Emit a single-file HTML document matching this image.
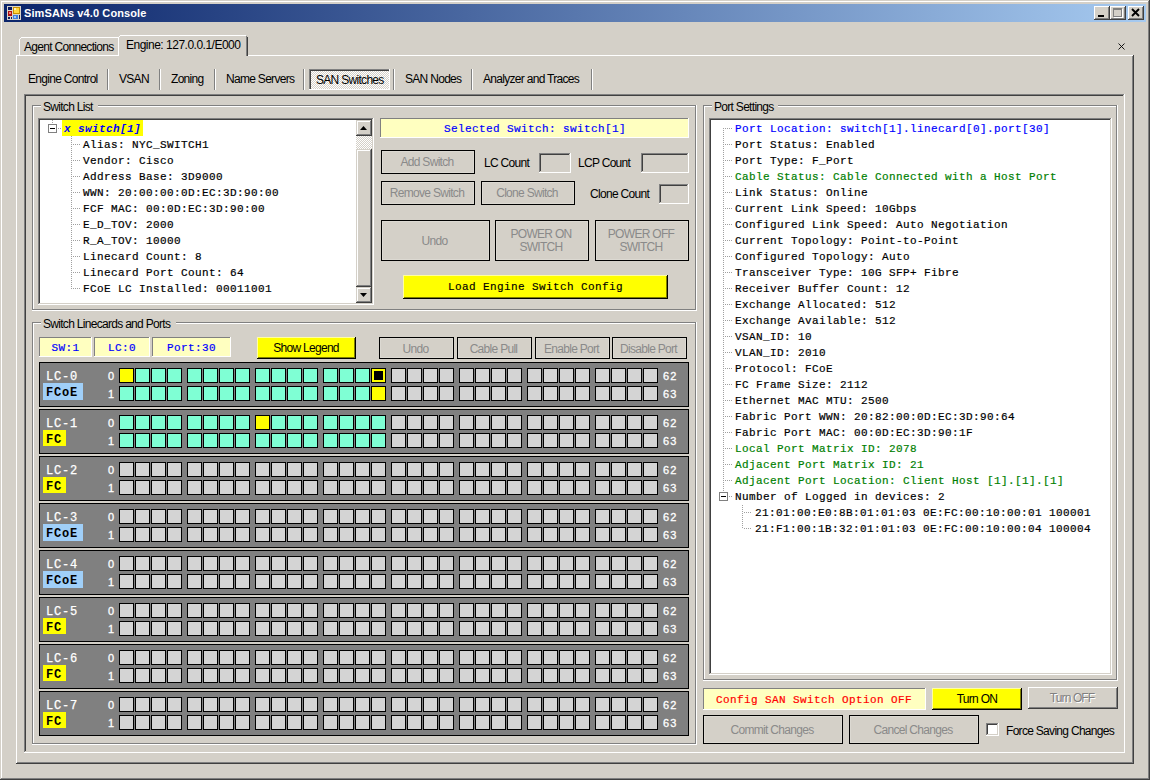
<!DOCTYPE html><html><head><meta charset="utf-8"><style>
html,body{margin:0;padding:0;}
body{width:1150px;height:780px;overflow:hidden;background:#d4d0c8;position:relative;font-family:"Liberation Sans",sans-serif;}
div{position:absolute;box-sizing:border-box;}
.t{font:12px "Liberation Sans",sans-serif;white-space:nowrap;color:#000;line-height:14px;letter-spacing:-0.7px;}
.c{text-align:center;}
.m{font:11px "Liberation Mono",monospace;-webkit-text-stroke-width:0.2px;white-space:nowrap;letter-spacing:0.4px;line-height:16px;color:#000;padding-top:1px;}
.mr{font:12px "Liberation Mono",monospace;white-space:nowrap;letter-spacing:-0.2px;line-height:16px;color:#000;}
</style></head><body>

<div style="left:1px;top:1px;width:1147px;height:1px;background:#ffffff"></div>
<div style="left:1px;top:1px;width:1px;height:777px;background:#ffffff"></div>
<div style="left:1148px;top:1px;width:1px;height:778px;background:#808080"></div>
<div style="left:1px;top:778px;width:1148px;height:1px;background:#808080"></div>
<div style="left:1149px;top:0px;width:1px;height:780px;background:#404040"></div>
<div style="left:0px;top:779px;width:1150px;height:1px;background:#404040"></div>
<div style="left:4px;top:4px;width:1142px;height:18px;background:linear-gradient(to right,#0a246a,#a6caf0)"></div>
<svg style="position:absolute;left:7px;top:6px" width="14" height="14" viewBox="0 0 14 14" shape-rendering="crispEdges">
<rect x="0" y="0" width="14" height="14" fill="#d8d4c8"/>
<rect x="1" y="1" width="4" height="3" fill="#0a1a60"/>
<rect x="1" y="5" width="4" height="5" fill="#b01010"/><rect x="2" y="6" width="2" height="2" fill="#f08080"/>
<rect x="1" y="11" width="2" height="2" fill="#0a1a60"/><rect x="4" y="11" width="1" height="2" fill="#0a1a60"/>
<rect x="6" y="1" width="7" height="7" fill="#c89000"/><rect x="7" y="2" width="5" height="5" fill="#ffd840"/><rect x="7" y="2" width="2" height="2" fill="#fff0c0"/>
<rect x="6" y="9" width="5" height="4" fill="#4080e0"/><rect x="7" y="10" width="2" height="2" fill="#a0c8f8"/>
<rect x="12" y="9" width="1" height="4" fill="#0a1a60"/>
</svg>
<div class="t" style="left:24px;top:6px;color:#fff;font-weight:bold;font-size:11px;letter-spacing:0.1px;">SimSANs v4.0 Console</div>
<div style="left:1094px;top:6px;width:16px;height:14px;background:#d4d0c8"></div>
<div style="left:1094px;top:19px;width:16px;height:1px;background:#404040"></div>
<div style="left:1109px;top:6px;width:1px;height:14px;background:#404040"></div>
<div style="left:1094px;top:6px;width:15px;height:1px;background:#ffffff"></div>
<div style="left:1094px;top:6px;width:1px;height:13px;background:#ffffff"></div>
<div style="left:1095px;top:18px;width:14px;height:1px;background:#808080"></div>
<div style="left:1108px;top:7px;width:1px;height:12px;background:#808080"></div>
<div style="left:1098px;top:15px;width:6px;height:2px;background:#000"></div>
<div style="left:1110px;top:6px;width:16px;height:14px;background:#d4d0c8"></div>
<div style="left:1110px;top:19px;width:16px;height:1px;background:#404040"></div>
<div style="left:1125px;top:6px;width:1px;height:14px;background:#404040"></div>
<div style="left:1110px;top:6px;width:15px;height:1px;background:#ffffff"></div>
<div style="left:1110px;top:6px;width:1px;height:13px;background:#ffffff"></div>
<div style="left:1111px;top:18px;width:14px;height:1px;background:#808080"></div>
<div style="left:1124px;top:7px;width:1px;height:12px;background:#808080"></div>
<div style="left:1113px;top:8px;width:9px;height:9px;border:1px solid #808080;border-top-width:2px;box-shadow:1px 1px 0 #fff"></div>
<div style="left:1128px;top:6px;width:16px;height:14px;background:#d4d0c8"></div>
<div style="left:1128px;top:19px;width:16px;height:1px;background:#404040"></div>
<div style="left:1143px;top:6px;width:1px;height:14px;background:#404040"></div>
<div style="left:1128px;top:6px;width:15px;height:1px;background:#ffffff"></div>
<div style="left:1128px;top:6px;width:1px;height:13px;background:#ffffff"></div>
<div style="left:1129px;top:18px;width:14px;height:1px;background:#808080"></div>
<div style="left:1142px;top:7px;width:1px;height:12px;background:#808080"></div>
<svg style="position:absolute;left:1131px;top:8px" width="10" height="9" viewBox="0 0 10 9"><path d="M1 1L8 8M8 1L1 8" stroke="#000" stroke-width="1.9"/></svg>
<div style="left:16px;top:55px;width:102px;height:1px;background:#ffffff"></div>
<div style="left:248px;top:55px;width:886px;height:1px;background:#ffffff"></div>
<div style="left:16px;top:55px;width:1px;height:709px;background:#ffffff"></div>
<div style="left:1132px;top:56px;width:1px;height:707px;background:#808080"></div>
<div style="left:1133px;top:55px;width:1px;height:709px;background:#404040"></div>
<div style="left:17px;top:762px;width:1116px;height:1px;background:#808080"></div>
<div style="left:16px;top:763px;width:1118px;height:1px;background:#404040"></div>
<div style="left:21px;top:37px;width:97px;height:1px;background:#ffffff"></div>
<div style="left:19px;top:39px;width:1px;height:16px;background:#ffffff"></div>
<div style="left:20px;top:38px;width:1px;height:1px;background:#ffffff"></div>
<div class="t" style="left:24px;top:40px;letter-spacing:-0.7px">Agent Connections</div>
<div style="left:120px;top:35px;width:126px;height:1px;background:#ffffff"></div>
<div style="left:118px;top:37px;width:1px;height:19px;background:#ffffff"></div>
<div style="left:119px;top:36px;width:1px;height:1px;background:#ffffff"></div>
<div style="left:246px;top:36px;width:1px;height:20px;background:#808080"></div>
<div style="left:247px;top:37px;width:1px;height:19px;background:#404040"></div>
<div class="t" style="left:126px;top:38px;letter-spacing:-0.5px">Engine: 127.0.0.1/E000</div>
<svg style="position:absolute;left:1118px;top:43px" width="7" height="7"><path d="M0.5 0.5L6.5 6.5M6.5 0.5L0.5 6.5" stroke="#000" stroke-width="0.9"/></svg>
<div class="t" style="left:28px;top:72px;">Engine Control</div>
<div style="left:107px;top:69px;width:1px;height:21px;background:#808080"></div>
<div style="left:108px;top:69px;width:1px;height:21px;background:#ffffff"></div>
<div class="t" style="left:119px;top:72px;">VSAN</div>
<div style="left:159px;top:69px;width:1px;height:21px;background:#808080"></div>
<div style="left:160px;top:69px;width:1px;height:21px;background:#ffffff"></div>
<div class="t" style="left:171px;top:72px;">Zoning</div>
<div style="left:214px;top:69px;width:1px;height:21px;background:#808080"></div>
<div style="left:215px;top:69px;width:1px;height:21px;background:#ffffff"></div>
<div class="t" style="left:226px;top:72px;">Name Servers</div>
<div style="left:303px;top:69px;width:1px;height:21px;background:#808080"></div>
<div style="left:304px;top:69px;width:1px;height:21px;background:#ffffff"></div>
<div style="left:309px;top:69px;width:81px;height:21px;background-color:#fff;background-image:repeating-conic-gradient(#d4d0c8 0 25%,#fff 0 50%);background-size:2px 2px;"></div>
<div style="left:309px;top:69px;width:81px;height:1px;background:#808080"></div>
<div style="left:309px;top:69px;width:1px;height:21px;background:#808080"></div>
<div style="left:310px;top:70px;width:79px;height:1px;background:#404040"></div>
<div style="left:310px;top:70px;width:1px;height:19px;background:#404040"></div>
<div style="left:309px;top:89px;width:81px;height:1px;background:#ffffff"></div>
<div style="left:389px;top:69px;width:1px;height:21px;background:#ffffff"></div>
<div class="t" style="left:316px;top:73px;">SAN Switches</div>
<div style="left:393px;top:69px;width:1px;height:21px;background:#808080"></div>
<div style="left:394px;top:69px;width:1px;height:21px;background:#ffffff"></div>
<div class="t" style="left:405px;top:72px;">SAN Nodes</div>
<div style="left:471px;top:69px;width:1px;height:21px;background:#808080"></div>
<div style="left:472px;top:69px;width:1px;height:21px;background:#ffffff"></div>
<div class="t" style="left:483px;top:72px;">Analyzer and Traces</div>
<div style="left:591px;top:69px;width:1px;height:21px;background:#808080"></div>
<div style="left:592px;top:69px;width:1px;height:21px;background:#ffffff"></div>
<div style="left:24px;top:94px;width:1101px;height:1px;background:#808080"></div>
<div style="left:24px;top:94px;width:1px;height:659px;background:#808080"></div>
<div style="left:25px;top:95px;width:1099px;height:1px;background:#404040"></div>
<div style="left:25px;top:95px;width:1px;height:657px;background:#404040"></div>
<div style="left:1124px;top:94px;width:1px;height:659px;background:#ffffff"></div>
<div style="left:24px;top:752px;width:1101px;height:1px;background:#ffffff"></div>
<div style="left:1123px;top:95px;width:1px;height:657px;background:#d4d0c8"></div>
<div style="left:25px;top:751px;width:1099px;height:1px;background:#d4d0c8"></div>
<div style="left:32px;top:105px;width:9px;height:1px;background:#808080"></div>
<div style="left:33px;top:106px;width:8px;height:1px;background:#ffffff"></div>
<div style="left:98px;top:105px;width:598px;height:1px;background:#808080"></div>
<div style="left:98px;top:106px;width:599px;height:1px;background:#ffffff"></div>
<div style="left:32px;top:105px;width:1px;height:205px;background:#808080"></div>
<div style="left:33px;top:106px;width:1px;height:204px;background:#ffffff"></div>
<div style="left:695px;top:105px;width:1px;height:205px;background:#808080"></div>
<div style="left:696px;top:105px;width:1px;height:206px;background:#ffffff"></div>
<div style="left:32px;top:309px;width:664px;height:1px;background:#808080"></div>
<div style="left:32px;top:310px;width:665px;height:1px;background:#ffffff"></div>
<div class="t" style="left:43px;top:100px;">Switch List</div>
<div style="left:38px;top:118px;width:336px;height:187px;background:#ffffff"></div>
<div style="left:38px;top:118px;width:336px;height:1px;background:#808080"></div>
<div style="left:38px;top:118px;width:1px;height:187px;background:#808080"></div>
<div style="left:38px;top:304px;width:336px;height:1px;background:#ffffff"></div>
<div style="left:373px;top:118px;width:1px;height:187px;background:#ffffff"></div>
<div style="left:39px;top:119px;width:334px;height:1px;background:#404040"></div>
<div style="left:39px;top:119px;width:1px;height:185px;background:#404040"></div>
<div style="left:39px;top:303px;width:334px;height:1px;background:#d4d0c8"></div>
<div style="left:372px;top:119px;width:1px;height:185px;background:#d4d0c8"></div>
<div style="left:356px;top:120px;width:16px;height:183px;background:#d4d0c8"></div>
<div style="left:356px;top:136px;width:16px;height:13px;background-color:#fff;background-image:repeating-conic-gradient(#d4d0c8 0 25%,#fff 0 50%);background-size:2px 2px;"></div>
<div style="left:356px;top:120px;width:16px;height:16px;background:#d4d0c8"></div>
<div style="left:356px;top:135px;width:16px;height:1px;background:#404040"></div>
<div style="left:371px;top:120px;width:1px;height:16px;background:#404040"></div>
<div style="left:357px;top:121px;width:13px;height:1px;background:#ffffff"></div>
<div style="left:357px;top:121px;width:1px;height:13px;background:#ffffff"></div>
<div style="left:357px;top:134px;width:14px;height:1px;background:#808080"></div>
<div style="left:370px;top:121px;width:1px;height:14px;background:#808080"></div>
<svg style="position:absolute;left:360px;top:126px" width="7" height="4"><path d="M3.5 0L7 4H0Z" fill="#000"/></svg>
<div style="left:356px;top:149px;width:16px;height:138px;background:#d4d0c8"></div>
<div style="left:356px;top:286px;width:16px;height:1px;background:#404040"></div>
<div style="left:371px;top:149px;width:1px;height:138px;background:#404040"></div>
<div style="left:357px;top:150px;width:13px;height:1px;background:#ffffff"></div>
<div style="left:357px;top:150px;width:1px;height:135px;background:#ffffff"></div>
<div style="left:357px;top:285px;width:14px;height:1px;background:#808080"></div>
<div style="left:370px;top:150px;width:1px;height:136px;background:#808080"></div>
<div style="left:356px;top:287px;width:16px;height:16px;background:#d4d0c8"></div>
<div style="left:356px;top:302px;width:16px;height:1px;background:#404040"></div>
<div style="left:371px;top:287px;width:1px;height:16px;background:#404040"></div>
<div style="left:357px;top:288px;width:13px;height:1px;background:#ffffff"></div>
<div style="left:357px;top:288px;width:1px;height:13px;background:#ffffff"></div>
<div style="left:357px;top:301px;width:14px;height:1px;background:#808080"></div>
<div style="left:370px;top:288px;width:1px;height:14px;background:#808080"></div>
<svg style="position:absolute;left:360px;top:293px" width="7" height="4"><path d="M0 0H7L3.5 4Z" fill="#000"/></svg>
<div style="left:52px;top:120px;width:1px;height:1px;background:#a0a0a0"></div>
<div style="left:52px;top:122px;width:1px;height:1px;background:#a0a0a0"></div>
<div style="left:48px;top:124px;width:9px;height:9px;border:1px solid #808080;background:#fff"></div>
<div style="left:50px;top:128px;width:5px;height:1px;background:#000000"></div>
<div style="left:58px;top:128px;width:4px;height:1px;background:repeating-linear-gradient(to right,#a0a0a0 0 1px,transparent 1px 2px)"></div>
<div style="left:62px;top:120px;width:81px;height:16px;background:#ffff00"></div>
<div class="m" style="left:64px;top:120px;color:#0000ff;font-style:italic;font-weight:bold;-webkit-text-stroke-width:0">x switch[1]</div>
<div style="left:71px;top:136px;width:1px;height:153px;background:repeating-linear-gradient(to bottom,#a0a0a0 0 1px,transparent 1px 2px)"></div>
<div style="left:73px;top:144px;width:8px;height:1px;background:repeating-linear-gradient(to right,#a0a0a0 0 1px,transparent 1px 2px)"></div>
<div class="m" style="left:83px;top:136px">Alias: NYC_SWITCH1</div>
<div style="left:73px;top:160px;width:8px;height:1px;background:repeating-linear-gradient(to right,#a0a0a0 0 1px,transparent 1px 2px)"></div>
<div class="m" style="left:83px;top:152px">Vendor: Cisco</div>
<div style="left:73px;top:176px;width:8px;height:1px;background:repeating-linear-gradient(to right,#a0a0a0 0 1px,transparent 1px 2px)"></div>
<div class="m" style="left:83px;top:168px">Address Base: 3D9000</div>
<div style="left:73px;top:192px;width:8px;height:1px;background:repeating-linear-gradient(to right,#a0a0a0 0 1px,transparent 1px 2px)"></div>
<div class="m" style="left:83px;top:184px">WWN: 20:00:00:0D:EC:3D:90:00</div>
<div style="left:73px;top:208px;width:8px;height:1px;background:repeating-linear-gradient(to right,#a0a0a0 0 1px,transparent 1px 2px)"></div>
<div class="m" style="left:83px;top:200px">FCF MAC: 00:0D:EC:3D:90:00</div>
<div style="left:73px;top:224px;width:8px;height:1px;background:repeating-linear-gradient(to right,#a0a0a0 0 1px,transparent 1px 2px)"></div>
<div class="m" style="left:83px;top:216px">E_D_TOV: 2000</div>
<div style="left:73px;top:240px;width:8px;height:1px;background:repeating-linear-gradient(to right,#a0a0a0 0 1px,transparent 1px 2px)"></div>
<div class="m" style="left:83px;top:232px">R_A_TOV: 10000</div>
<div style="left:73px;top:256px;width:8px;height:1px;background:repeating-linear-gradient(to right,#a0a0a0 0 1px,transparent 1px 2px)"></div>
<div class="m" style="left:83px;top:248px">Linecard Count: 8</div>
<div style="left:73px;top:272px;width:8px;height:1px;background:repeating-linear-gradient(to right,#a0a0a0 0 1px,transparent 1px 2px)"></div>
<div class="m" style="left:83px;top:264px">Linecard Port Count: 64</div>
<div style="left:73px;top:288px;width:8px;height:1px;background:repeating-linear-gradient(to right,#a0a0a0 0 1px,transparent 1px 2px)"></div>
<div class="m" style="left:83px;top:280px">FCoE LC Installed: 00011001</div>
<div style="left:380px;top:118px;width:309px;height:20px;background:#ffffc0"></div>
<div style="left:380px;top:118px;width:309px;height:1px;background:#808080"></div>
<div style="left:380px;top:118px;width:1px;height:20px;background:#808080"></div>
<div style="left:380px;top:137px;width:309px;height:1px;background:#ffffff"></div>
<div style="left:688px;top:118px;width:1px;height:20px;background:#ffffff"></div>
<div class="m c" style="left:381px;top:120px;width:308px;color:#0000ff">Selected Switch: switch[1]</div>
<div style="left:381px;top:150px;width:94px;height:24px;background:#000000"></div>
<div style="left:382px;top:151px;width:92px;height:22px;background:#dcd9d2"></div>
<div style="left:383px;top:152px;width:90px;height:20px;background:#d4d0c8"></div>
<div class="t c" style="left:380px;top:150px;width:94px;height:24px;line-height:24px;color:#8a8a8a">Add Switch</div>
<div class="t" style="left:484px;top:156px;">LC Count</div>
<div style="left:539px;top:153px;width:32px;height:20px;background:#d4d0c8"></div>
<div style="left:539px;top:153px;width:32px;height:1px;background:#808080"></div>
<div style="left:539px;top:153px;width:1px;height:20px;background:#808080"></div>
<div style="left:539px;top:172px;width:32px;height:1px;background:#ffffff"></div>
<div style="left:570px;top:153px;width:1px;height:20px;background:#ffffff"></div>
<div style="left:540px;top:154px;width:30px;height:1px;background:#404040"></div>
<div style="left:540px;top:154px;width:1px;height:18px;background:#404040"></div>
<div style="left:540px;top:171px;width:30px;height:1px;background:#d4d0c8"></div>
<div style="left:569px;top:154px;width:1px;height:18px;background:#d4d0c8"></div>
<div class="t" style="left:578px;top:156px;">LCP Count</div>
<div style="left:641px;top:153px;width:48px;height:20px;background:#d4d0c8"></div>
<div style="left:641px;top:153px;width:48px;height:1px;background:#808080"></div>
<div style="left:641px;top:153px;width:1px;height:20px;background:#808080"></div>
<div style="left:641px;top:172px;width:48px;height:1px;background:#ffffff"></div>
<div style="left:688px;top:153px;width:1px;height:20px;background:#ffffff"></div>
<div style="left:642px;top:154px;width:46px;height:1px;background:#404040"></div>
<div style="left:642px;top:154px;width:1px;height:18px;background:#404040"></div>
<div style="left:642px;top:171px;width:46px;height:1px;background:#d4d0c8"></div>
<div style="left:687px;top:154px;width:1px;height:18px;background:#d4d0c8"></div>
<div style="left:381px;top:181px;width:94px;height:24px;background:#000000"></div>
<div style="left:382px;top:182px;width:92px;height:22px;background:#dcd9d2"></div>
<div style="left:383px;top:183px;width:90px;height:20px;background:#d4d0c8"></div>
<div class="t c" style="left:380px;top:181px;width:94px;height:24px;line-height:24px;color:#8a8a8a">Remove Switch</div>
<div style="left:481px;top:181px;width:94px;height:24px;background:#000000"></div>
<div style="left:482px;top:182px;width:92px;height:22px;background:#dcd9d2"></div>
<div style="left:483px;top:183px;width:90px;height:20px;background:#d4d0c8"></div>
<div class="t c" style="left:480px;top:181px;width:94px;height:24px;line-height:24px;color:#8a8a8a">Clone Switch</div>
<div class="t" style="left:590px;top:187px;">Clone Count</div>
<div style="left:659px;top:184px;width:30px;height:20px;background:#d4d0c8"></div>
<div style="left:659px;top:184px;width:30px;height:1px;background:#808080"></div>
<div style="left:659px;top:184px;width:1px;height:20px;background:#808080"></div>
<div style="left:659px;top:203px;width:30px;height:1px;background:#ffffff"></div>
<div style="left:688px;top:184px;width:1px;height:20px;background:#ffffff"></div>
<div style="left:660px;top:185px;width:28px;height:1px;background:#404040"></div>
<div style="left:660px;top:185px;width:1px;height:18px;background:#404040"></div>
<div style="left:660px;top:202px;width:28px;height:1px;background:#d4d0c8"></div>
<div style="left:687px;top:185px;width:1px;height:18px;background:#d4d0c8"></div>
<div style="left:381px;top:220px;width:109px;height:41px;background:#000000"></div>
<div style="left:382px;top:221px;width:107px;height:39px;background:#dcd9d2"></div>
<div style="left:383px;top:222px;width:105px;height:37px;background:#d4d0c8"></div>
<div class="t c" style="left:380px;top:221px;width:109px;height:41px;line-height:41px;color:#8a8a8a">Undo</div>
<div style="left:495px;top:220px;width:94px;height:41px;background:#000000"></div>
<div style="left:496px;top:221px;width:92px;height:39px;background:#dcd9d2"></div>
<div style="left:497px;top:222px;width:90px;height:37px;background:#d4d0c8"></div>
<div class="t c" style="left:494px;top:220px;width:94px;height:41px;line-height:41px;color:#8a8a8a"></div>
<div class="t c" style="left:494px;top:228px;width:94px;color:#8a8a8a;line-height:13px">POWER ON<br>SWITCH</div>
<div style="left:595px;top:220px;width:94px;height:41px;background:#000000"></div>
<div style="left:596px;top:221px;width:92px;height:39px;background:#dcd9d2"></div>
<div style="left:597px;top:222px;width:90px;height:37px;background:#d4d0c8"></div>
<div class="t c" style="left:594px;top:220px;width:94px;height:41px;line-height:41px;color:#8a8a8a"></div>
<div class="t c" style="left:594px;top:228px;width:94px;color:#8a8a8a;line-height:13px">POWER OFF<br>SWITCH</div>
<div style="left:403px;top:275px;width:265px;height:24px;background:#ffff00"></div>
<div style="left:403px;top:298px;width:265px;height:1px;background:#000000"></div>
<div style="left:667px;top:275px;width:1px;height:24px;background:#000000"></div>
<div style="left:403px;top:275px;width:264px;height:1px;background:#ffffa0"></div>
<div style="left:403px;top:275px;width:1px;height:23px;background:#ffffa0"></div>
<div style="left:404px;top:297px;width:263px;height:1px;background:#808000"></div>
<div style="left:666px;top:276px;width:1px;height:22px;background:#808000"></div>
<div class="m c" style="left:403px;top:278px;width:265px;-webkit-text-stroke-width:0.15px">Load Engine Switch Config</div>
<div style="left:32px;top:322px;width:9px;height:1px;background:#808080"></div>
<div style="left:33px;top:323px;width:8px;height:1px;background:#ffffff"></div>
<div style="left:176px;top:322px;width:520px;height:1px;background:#808080"></div>
<div style="left:176px;top:323px;width:521px;height:1px;background:#ffffff"></div>
<div style="left:32px;top:322px;width:1px;height:422px;background:#808080"></div>
<div style="left:33px;top:323px;width:1px;height:421px;background:#ffffff"></div>
<div style="left:695px;top:322px;width:1px;height:422px;background:#808080"></div>
<div style="left:696px;top:322px;width:1px;height:423px;background:#ffffff"></div>
<div style="left:32px;top:743px;width:664px;height:1px;background:#808080"></div>
<div style="left:32px;top:744px;width:665px;height:1px;background:#ffffff"></div>
<div class="t" style="left:43px;top:317px;">Switch Linecards and Ports</div>
<div style="left:39px;top:337px;width:53px;height:20px;background:#ffffc0"></div>
<div style="left:39px;top:337px;width:53px;height:1px;background:#808080"></div>
<div style="left:39px;top:337px;width:1px;height:20px;background:#808080"></div>
<div style="left:39px;top:356px;width:53px;height:1px;background:#ffffff"></div>
<div style="left:91px;top:337px;width:1px;height:20px;background:#ffffff"></div>
<div class="m c" style="left:39px;top:339px;width:53px;color:#0000ff">SW:1</div>
<div style="left:94px;top:337px;width:56px;height:20px;background:#ffffc0"></div>
<div style="left:94px;top:337px;width:56px;height:1px;background:#808080"></div>
<div style="left:94px;top:337px;width:1px;height:20px;background:#808080"></div>
<div style="left:94px;top:356px;width:56px;height:1px;background:#ffffff"></div>
<div style="left:149px;top:337px;width:1px;height:20px;background:#ffffff"></div>
<div class="m c" style="left:94px;top:339px;width:56px;color:#0000ff">LC:0</div>
<div style="left:152px;top:337px;width:79px;height:20px;background:#ffffc0"></div>
<div style="left:152px;top:337px;width:79px;height:1px;background:#808080"></div>
<div style="left:152px;top:337px;width:1px;height:20px;background:#808080"></div>
<div style="left:152px;top:356px;width:79px;height:1px;background:#ffffff"></div>
<div style="left:230px;top:337px;width:1px;height:20px;background:#ffffff"></div>
<div class="m c" style="left:152px;top:339px;width:79px;color:#0000ff">Port:30</div>
<div style="left:257px;top:337px;width:99px;height:22px;background:#ffff00"></div>
<div style="left:257px;top:358px;width:99px;height:1px;background:#000000"></div>
<div style="left:355px;top:337px;width:1px;height:22px;background:#000000"></div>
<div style="left:257px;top:337px;width:98px;height:1px;background:#ffffa0"></div>
<div style="left:257px;top:337px;width:1px;height:21px;background:#ffffa0"></div>
<div style="left:258px;top:357px;width:97px;height:1px;background:#808000"></div>
<div style="left:354px;top:338px;width:1px;height:20px;background:#808000"></div>
<div class="t c" style="left:257px;top:341px;width:98px;">Show Legend</div>
<div style="left:379px;top:337px;width:75px;height:22px;background:#000000"></div>
<div style="left:380px;top:338px;width:73px;height:20px;background:#dcd9d2"></div>
<div style="left:381px;top:339px;width:71px;height:18px;background:#d4d0c8"></div>
<div class="t c" style="left:378px;top:338px;width:75px;height:22px;line-height:22px;color:#8a8a8a">Undo</div>
<div style="left:457px;top:337px;width:75px;height:22px;background:#000000"></div>
<div style="left:458px;top:338px;width:73px;height:20px;background:#dcd9d2"></div>
<div style="left:459px;top:339px;width:71px;height:18px;background:#d4d0c8"></div>
<div class="t c" style="left:456px;top:338px;width:75px;height:22px;line-height:22px;color:#8a8a8a">Cable Pull</div>
<div style="left:535px;top:337px;width:75px;height:22px;background:#000000"></div>
<div style="left:536px;top:338px;width:73px;height:20px;background:#dcd9d2"></div>
<div style="left:537px;top:339px;width:71px;height:18px;background:#d4d0c8"></div>
<div class="t c" style="left:534px;top:338px;width:75px;height:22px;line-height:22px;color:#8a8a8a">Enable Port</div>
<div style="left:612px;top:337px;width:75px;height:22px;background:#000000"></div>
<div style="left:613px;top:338px;width:73px;height:20px;background:#dcd9d2"></div>
<div style="left:614px;top:339px;width:71px;height:18px;background:#d4d0c8"></div>
<div class="t c" style="left:611px;top:338px;width:75px;height:22px;line-height:22px;color:#8a8a8a">Disable Port</div>
<div style="left:39px;top:362px;width:650px;height:45px;background:#000000"></div>
<div style="left:40px;top:363px;width:648px;height:43px;background:#808080"></div>
<div class="mr" style="left:46px;top:369px;color:#ffffff;font-size:12px;letter-spacing:0.8px;-webkit-text-stroke:0.25px #fff">LC-0</div>
<div style="left:43px;top:383px;width:40px;height:17px;background:#a0cff8"></div>
<div class="mr" style="left:46px;top:385px;font-weight:bold;font-size:12px;letter-spacing:0.8px">FCoE</div>
<div class="t" style="left:108px;top:369px;color:#fff;font-size:11px;letter-spacing:1.2px;-webkit-text-stroke:0.3px #fff">0</div>
<div class="t" style="left:108px;top:387px;color:#fff;font-size:11px;letter-spacing:1.2px;-webkit-text-stroke:0.3px #fff">1</div>
<div class="t" style="left:663px;top:369px;color:#fff;font-size:11px;letter-spacing:1.2px;-webkit-text-stroke:0.3px #fff">62</div>
<div class="t" style="left:663px;top:387px;color:#fff;font-size:11px;letter-spacing:1.2px;-webkit-text-stroke:0.3px #fff">63</div>
<div style="left:119px;top:368px;width:15px;height:15px;border:1px solid #000;background:#ffff00"></div>
<div style="left:135px;top:368px;width:15px;height:15px;border:1px solid #000;background:#7fffd4"></div>
<div style="left:151px;top:368px;width:15px;height:15px;border:1px solid #000;background:#7fffd4"></div>
<div style="left:167px;top:368px;width:15px;height:15px;border:1px solid #000;background:#7fffd4"></div>
<div style="left:187px;top:368px;width:15px;height:15px;border:1px solid #000;background:#7fffd4"></div>
<div style="left:203px;top:368px;width:15px;height:15px;border:1px solid #000;background:#7fffd4"></div>
<div style="left:219px;top:368px;width:15px;height:15px;border:1px solid #000;background:#7fffd4"></div>
<div style="left:235px;top:368px;width:15px;height:15px;border:1px solid #000;background:#7fffd4"></div>
<div style="left:255px;top:368px;width:15px;height:15px;border:1px solid #000;background:#7fffd4"></div>
<div style="left:271px;top:368px;width:15px;height:15px;border:1px solid #000;background:#7fffd4"></div>
<div style="left:287px;top:368px;width:15px;height:15px;border:1px solid #000;background:#7fffd4"></div>
<div style="left:303px;top:368px;width:15px;height:15px;border:1px solid #000;background:#7fffd4"></div>
<div style="left:323px;top:368px;width:15px;height:15px;border:1px solid #000;background:#7fffd4"></div>
<div style="left:339px;top:368px;width:15px;height:15px;border:1px solid #000;background:#7fffd4"></div>
<div style="left:355px;top:368px;width:15px;height:15px;border:1px solid #000;background:#7fffd4"></div>
<div style="left:371px;top:368px;width:15px;height:15px;border:1px solid #000;background:#ffff00"></div>
<div style="left:374px;top:371px;width:9px;height:9px;background:#000000"></div>
<div style="left:391px;top:368px;width:15px;height:15px;border:1px solid #000;background:#d4d4d4"></div>
<div style="left:407px;top:368px;width:15px;height:15px;border:1px solid #000;background:#d4d4d4"></div>
<div style="left:423px;top:368px;width:15px;height:15px;border:1px solid #000;background:#d4d4d4"></div>
<div style="left:439px;top:368px;width:15px;height:15px;border:1px solid #000;background:#d4d4d4"></div>
<div style="left:459px;top:368px;width:15px;height:15px;border:1px solid #000;background:#d4d4d4"></div>
<div style="left:475px;top:368px;width:15px;height:15px;border:1px solid #000;background:#d4d4d4"></div>
<div style="left:491px;top:368px;width:15px;height:15px;border:1px solid #000;background:#d4d4d4"></div>
<div style="left:507px;top:368px;width:15px;height:15px;border:1px solid #000;background:#d4d4d4"></div>
<div style="left:527px;top:368px;width:15px;height:15px;border:1px solid #000;background:#d4d4d4"></div>
<div style="left:543px;top:368px;width:15px;height:15px;border:1px solid #000;background:#d4d4d4"></div>
<div style="left:559px;top:368px;width:15px;height:15px;border:1px solid #000;background:#d4d4d4"></div>
<div style="left:575px;top:368px;width:15px;height:15px;border:1px solid #000;background:#d4d4d4"></div>
<div style="left:595px;top:368px;width:15px;height:15px;border:1px solid #000;background:#d4d4d4"></div>
<div style="left:611px;top:368px;width:15px;height:15px;border:1px solid #000;background:#d4d4d4"></div>
<div style="left:627px;top:368px;width:15px;height:15px;border:1px solid #000;background:#d4d4d4"></div>
<div style="left:643px;top:368px;width:15px;height:15px;border:1px solid #000;background:#d4d4d4"></div>
<div style="left:119px;top:386px;width:15px;height:15px;border:1px solid #000;background:#7fffd4"></div>
<div style="left:135px;top:386px;width:15px;height:15px;border:1px solid #000;background:#7fffd4"></div>
<div style="left:151px;top:386px;width:15px;height:15px;border:1px solid #000;background:#7fffd4"></div>
<div style="left:167px;top:386px;width:15px;height:15px;border:1px solid #000;background:#7fffd4"></div>
<div style="left:187px;top:386px;width:15px;height:15px;border:1px solid #000;background:#7fffd4"></div>
<div style="left:203px;top:386px;width:15px;height:15px;border:1px solid #000;background:#7fffd4"></div>
<div style="left:219px;top:386px;width:15px;height:15px;border:1px solid #000;background:#7fffd4"></div>
<div style="left:235px;top:386px;width:15px;height:15px;border:1px solid #000;background:#7fffd4"></div>
<div style="left:255px;top:386px;width:15px;height:15px;border:1px solid #000;background:#7fffd4"></div>
<div style="left:271px;top:386px;width:15px;height:15px;border:1px solid #000;background:#7fffd4"></div>
<div style="left:287px;top:386px;width:15px;height:15px;border:1px solid #000;background:#7fffd4"></div>
<div style="left:303px;top:386px;width:15px;height:15px;border:1px solid #000;background:#7fffd4"></div>
<div style="left:323px;top:386px;width:15px;height:15px;border:1px solid #000;background:#7fffd4"></div>
<div style="left:339px;top:386px;width:15px;height:15px;border:1px solid #000;background:#7fffd4"></div>
<div style="left:355px;top:386px;width:15px;height:15px;border:1px solid #000;background:#7fffd4"></div>
<div style="left:371px;top:386px;width:15px;height:15px;border:1px solid #000;background:#ffff00"></div>
<div style="left:391px;top:386px;width:15px;height:15px;border:1px solid #000;background:#d4d4d4"></div>
<div style="left:407px;top:386px;width:15px;height:15px;border:1px solid #000;background:#d4d4d4"></div>
<div style="left:423px;top:386px;width:15px;height:15px;border:1px solid #000;background:#d4d4d4"></div>
<div style="left:439px;top:386px;width:15px;height:15px;border:1px solid #000;background:#d4d4d4"></div>
<div style="left:459px;top:386px;width:15px;height:15px;border:1px solid #000;background:#d4d4d4"></div>
<div style="left:475px;top:386px;width:15px;height:15px;border:1px solid #000;background:#d4d4d4"></div>
<div style="left:491px;top:386px;width:15px;height:15px;border:1px solid #000;background:#d4d4d4"></div>
<div style="left:507px;top:386px;width:15px;height:15px;border:1px solid #000;background:#d4d4d4"></div>
<div style="left:527px;top:386px;width:15px;height:15px;border:1px solid #000;background:#d4d4d4"></div>
<div style="left:543px;top:386px;width:15px;height:15px;border:1px solid #000;background:#d4d4d4"></div>
<div style="left:559px;top:386px;width:15px;height:15px;border:1px solid #000;background:#d4d4d4"></div>
<div style="left:575px;top:386px;width:15px;height:15px;border:1px solid #000;background:#d4d4d4"></div>
<div style="left:595px;top:386px;width:15px;height:15px;border:1px solid #000;background:#d4d4d4"></div>
<div style="left:611px;top:386px;width:15px;height:15px;border:1px solid #000;background:#d4d4d4"></div>
<div style="left:627px;top:386px;width:15px;height:15px;border:1px solid #000;background:#d4d4d4"></div>
<div style="left:643px;top:386px;width:15px;height:15px;border:1px solid #000;background:#d4d4d4"></div>
<div style="left:39px;top:409px;width:650px;height:45px;background:#000000"></div>
<div style="left:40px;top:410px;width:648px;height:43px;background:#808080"></div>
<div class="mr" style="left:46px;top:416px;color:#ffffff;font-size:12px;letter-spacing:0.8px;-webkit-text-stroke:0.25px #fff">LC-1</div>
<div style="left:43px;top:430px;width:23px;height:16px;background:#ffff00"></div>
<div class="mr" style="left:46px;top:432px;font-weight:bold;font-size:12px;letter-spacing:0.8px">FC</div>
<div class="t" style="left:108px;top:416px;color:#fff;font-size:11px;letter-spacing:1.2px;-webkit-text-stroke:0.3px #fff">0</div>
<div class="t" style="left:108px;top:434px;color:#fff;font-size:11px;letter-spacing:1.2px;-webkit-text-stroke:0.3px #fff">1</div>
<div class="t" style="left:663px;top:416px;color:#fff;font-size:11px;letter-spacing:1.2px;-webkit-text-stroke:0.3px #fff">62</div>
<div class="t" style="left:663px;top:434px;color:#fff;font-size:11px;letter-spacing:1.2px;-webkit-text-stroke:0.3px #fff">63</div>
<div style="left:119px;top:415px;width:15px;height:15px;border:1px solid #000;background:#7fffd4"></div>
<div style="left:135px;top:415px;width:15px;height:15px;border:1px solid #000;background:#7fffd4"></div>
<div style="left:151px;top:415px;width:15px;height:15px;border:1px solid #000;background:#7fffd4"></div>
<div style="left:167px;top:415px;width:15px;height:15px;border:1px solid #000;background:#7fffd4"></div>
<div style="left:187px;top:415px;width:15px;height:15px;border:1px solid #000;background:#7fffd4"></div>
<div style="left:203px;top:415px;width:15px;height:15px;border:1px solid #000;background:#7fffd4"></div>
<div style="left:219px;top:415px;width:15px;height:15px;border:1px solid #000;background:#7fffd4"></div>
<div style="left:235px;top:415px;width:15px;height:15px;border:1px solid #000;background:#7fffd4"></div>
<div style="left:255px;top:415px;width:15px;height:15px;border:1px solid #000;background:#ffff00"></div>
<div style="left:271px;top:415px;width:15px;height:15px;border:1px solid #000;background:#7fffd4"></div>
<div style="left:287px;top:415px;width:15px;height:15px;border:1px solid #000;background:#7fffd4"></div>
<div style="left:303px;top:415px;width:15px;height:15px;border:1px solid #000;background:#7fffd4"></div>
<div style="left:323px;top:415px;width:15px;height:15px;border:1px solid #000;background:#7fffd4"></div>
<div style="left:339px;top:415px;width:15px;height:15px;border:1px solid #000;background:#7fffd4"></div>
<div style="left:355px;top:415px;width:15px;height:15px;border:1px solid #000;background:#7fffd4"></div>
<div style="left:371px;top:415px;width:15px;height:15px;border:1px solid #000;background:#7fffd4"></div>
<div style="left:391px;top:415px;width:15px;height:15px;border:1px solid #000;background:#d4d4d4"></div>
<div style="left:407px;top:415px;width:15px;height:15px;border:1px solid #000;background:#d4d4d4"></div>
<div style="left:423px;top:415px;width:15px;height:15px;border:1px solid #000;background:#d4d4d4"></div>
<div style="left:439px;top:415px;width:15px;height:15px;border:1px solid #000;background:#d4d4d4"></div>
<div style="left:459px;top:415px;width:15px;height:15px;border:1px solid #000;background:#d4d4d4"></div>
<div style="left:475px;top:415px;width:15px;height:15px;border:1px solid #000;background:#d4d4d4"></div>
<div style="left:491px;top:415px;width:15px;height:15px;border:1px solid #000;background:#d4d4d4"></div>
<div style="left:507px;top:415px;width:15px;height:15px;border:1px solid #000;background:#d4d4d4"></div>
<div style="left:527px;top:415px;width:15px;height:15px;border:1px solid #000;background:#d4d4d4"></div>
<div style="left:543px;top:415px;width:15px;height:15px;border:1px solid #000;background:#d4d4d4"></div>
<div style="left:559px;top:415px;width:15px;height:15px;border:1px solid #000;background:#d4d4d4"></div>
<div style="left:575px;top:415px;width:15px;height:15px;border:1px solid #000;background:#d4d4d4"></div>
<div style="left:595px;top:415px;width:15px;height:15px;border:1px solid #000;background:#d4d4d4"></div>
<div style="left:611px;top:415px;width:15px;height:15px;border:1px solid #000;background:#d4d4d4"></div>
<div style="left:627px;top:415px;width:15px;height:15px;border:1px solid #000;background:#d4d4d4"></div>
<div style="left:643px;top:415px;width:15px;height:15px;border:1px solid #000;background:#d4d4d4"></div>
<div style="left:119px;top:433px;width:15px;height:15px;border:1px solid #000;background:#7fffd4"></div>
<div style="left:135px;top:433px;width:15px;height:15px;border:1px solid #000;background:#7fffd4"></div>
<div style="left:151px;top:433px;width:15px;height:15px;border:1px solid #000;background:#7fffd4"></div>
<div style="left:167px;top:433px;width:15px;height:15px;border:1px solid #000;background:#7fffd4"></div>
<div style="left:187px;top:433px;width:15px;height:15px;border:1px solid #000;background:#7fffd4"></div>
<div style="left:203px;top:433px;width:15px;height:15px;border:1px solid #000;background:#7fffd4"></div>
<div style="left:219px;top:433px;width:15px;height:15px;border:1px solid #000;background:#7fffd4"></div>
<div style="left:235px;top:433px;width:15px;height:15px;border:1px solid #000;background:#7fffd4"></div>
<div style="left:255px;top:433px;width:15px;height:15px;border:1px solid #000;background:#7fffd4"></div>
<div style="left:271px;top:433px;width:15px;height:15px;border:1px solid #000;background:#7fffd4"></div>
<div style="left:287px;top:433px;width:15px;height:15px;border:1px solid #000;background:#7fffd4"></div>
<div style="left:303px;top:433px;width:15px;height:15px;border:1px solid #000;background:#7fffd4"></div>
<div style="left:323px;top:433px;width:15px;height:15px;border:1px solid #000;background:#7fffd4"></div>
<div style="left:339px;top:433px;width:15px;height:15px;border:1px solid #000;background:#7fffd4"></div>
<div style="left:355px;top:433px;width:15px;height:15px;border:1px solid #000;background:#7fffd4"></div>
<div style="left:371px;top:433px;width:15px;height:15px;border:1px solid #000;background:#7fffd4"></div>
<div style="left:391px;top:433px;width:15px;height:15px;border:1px solid #000;background:#d4d4d4"></div>
<div style="left:407px;top:433px;width:15px;height:15px;border:1px solid #000;background:#d4d4d4"></div>
<div style="left:423px;top:433px;width:15px;height:15px;border:1px solid #000;background:#d4d4d4"></div>
<div style="left:439px;top:433px;width:15px;height:15px;border:1px solid #000;background:#d4d4d4"></div>
<div style="left:459px;top:433px;width:15px;height:15px;border:1px solid #000;background:#d4d4d4"></div>
<div style="left:475px;top:433px;width:15px;height:15px;border:1px solid #000;background:#d4d4d4"></div>
<div style="left:491px;top:433px;width:15px;height:15px;border:1px solid #000;background:#d4d4d4"></div>
<div style="left:507px;top:433px;width:15px;height:15px;border:1px solid #000;background:#d4d4d4"></div>
<div style="left:527px;top:433px;width:15px;height:15px;border:1px solid #000;background:#d4d4d4"></div>
<div style="left:543px;top:433px;width:15px;height:15px;border:1px solid #000;background:#d4d4d4"></div>
<div style="left:559px;top:433px;width:15px;height:15px;border:1px solid #000;background:#d4d4d4"></div>
<div style="left:575px;top:433px;width:15px;height:15px;border:1px solid #000;background:#d4d4d4"></div>
<div style="left:595px;top:433px;width:15px;height:15px;border:1px solid #000;background:#d4d4d4"></div>
<div style="left:611px;top:433px;width:15px;height:15px;border:1px solid #000;background:#d4d4d4"></div>
<div style="left:627px;top:433px;width:15px;height:15px;border:1px solid #000;background:#d4d4d4"></div>
<div style="left:643px;top:433px;width:15px;height:15px;border:1px solid #000;background:#d4d4d4"></div>
<div style="left:39px;top:456px;width:650px;height:45px;background:#000000"></div>
<div style="left:40px;top:457px;width:648px;height:43px;background:#808080"></div>
<div class="mr" style="left:46px;top:463px;color:#ffffff;font-size:12px;letter-spacing:0.8px;-webkit-text-stroke:0.25px #fff">LC-2</div>
<div style="left:43px;top:477px;width:23px;height:16px;background:#ffff00"></div>
<div class="mr" style="left:46px;top:479px;font-weight:bold;font-size:12px;letter-spacing:0.8px">FC</div>
<div class="t" style="left:108px;top:463px;color:#fff;font-size:11px;letter-spacing:1.2px;-webkit-text-stroke:0.3px #fff">0</div>
<div class="t" style="left:108px;top:481px;color:#fff;font-size:11px;letter-spacing:1.2px;-webkit-text-stroke:0.3px #fff">1</div>
<div class="t" style="left:663px;top:463px;color:#fff;font-size:11px;letter-spacing:1.2px;-webkit-text-stroke:0.3px #fff">62</div>
<div class="t" style="left:663px;top:481px;color:#fff;font-size:11px;letter-spacing:1.2px;-webkit-text-stroke:0.3px #fff">63</div>
<div style="left:119px;top:462px;width:15px;height:15px;border:1px solid #000;background:#d4d4d4"></div>
<div style="left:135px;top:462px;width:15px;height:15px;border:1px solid #000;background:#d4d4d4"></div>
<div style="left:151px;top:462px;width:15px;height:15px;border:1px solid #000;background:#d4d4d4"></div>
<div style="left:167px;top:462px;width:15px;height:15px;border:1px solid #000;background:#d4d4d4"></div>
<div style="left:187px;top:462px;width:15px;height:15px;border:1px solid #000;background:#d4d4d4"></div>
<div style="left:203px;top:462px;width:15px;height:15px;border:1px solid #000;background:#d4d4d4"></div>
<div style="left:219px;top:462px;width:15px;height:15px;border:1px solid #000;background:#d4d4d4"></div>
<div style="left:235px;top:462px;width:15px;height:15px;border:1px solid #000;background:#d4d4d4"></div>
<div style="left:255px;top:462px;width:15px;height:15px;border:1px solid #000;background:#d4d4d4"></div>
<div style="left:271px;top:462px;width:15px;height:15px;border:1px solid #000;background:#d4d4d4"></div>
<div style="left:287px;top:462px;width:15px;height:15px;border:1px solid #000;background:#d4d4d4"></div>
<div style="left:303px;top:462px;width:15px;height:15px;border:1px solid #000;background:#d4d4d4"></div>
<div style="left:323px;top:462px;width:15px;height:15px;border:1px solid #000;background:#d4d4d4"></div>
<div style="left:339px;top:462px;width:15px;height:15px;border:1px solid #000;background:#d4d4d4"></div>
<div style="left:355px;top:462px;width:15px;height:15px;border:1px solid #000;background:#d4d4d4"></div>
<div style="left:371px;top:462px;width:15px;height:15px;border:1px solid #000;background:#d4d4d4"></div>
<div style="left:391px;top:462px;width:15px;height:15px;border:1px solid #000;background:#d4d4d4"></div>
<div style="left:407px;top:462px;width:15px;height:15px;border:1px solid #000;background:#d4d4d4"></div>
<div style="left:423px;top:462px;width:15px;height:15px;border:1px solid #000;background:#d4d4d4"></div>
<div style="left:439px;top:462px;width:15px;height:15px;border:1px solid #000;background:#d4d4d4"></div>
<div style="left:459px;top:462px;width:15px;height:15px;border:1px solid #000;background:#d4d4d4"></div>
<div style="left:475px;top:462px;width:15px;height:15px;border:1px solid #000;background:#d4d4d4"></div>
<div style="left:491px;top:462px;width:15px;height:15px;border:1px solid #000;background:#d4d4d4"></div>
<div style="left:507px;top:462px;width:15px;height:15px;border:1px solid #000;background:#d4d4d4"></div>
<div style="left:527px;top:462px;width:15px;height:15px;border:1px solid #000;background:#d4d4d4"></div>
<div style="left:543px;top:462px;width:15px;height:15px;border:1px solid #000;background:#d4d4d4"></div>
<div style="left:559px;top:462px;width:15px;height:15px;border:1px solid #000;background:#d4d4d4"></div>
<div style="left:575px;top:462px;width:15px;height:15px;border:1px solid #000;background:#d4d4d4"></div>
<div style="left:595px;top:462px;width:15px;height:15px;border:1px solid #000;background:#d4d4d4"></div>
<div style="left:611px;top:462px;width:15px;height:15px;border:1px solid #000;background:#d4d4d4"></div>
<div style="left:627px;top:462px;width:15px;height:15px;border:1px solid #000;background:#d4d4d4"></div>
<div style="left:643px;top:462px;width:15px;height:15px;border:1px solid #000;background:#d4d4d4"></div>
<div style="left:119px;top:480px;width:15px;height:15px;border:1px solid #000;background:#d4d4d4"></div>
<div style="left:135px;top:480px;width:15px;height:15px;border:1px solid #000;background:#d4d4d4"></div>
<div style="left:151px;top:480px;width:15px;height:15px;border:1px solid #000;background:#d4d4d4"></div>
<div style="left:167px;top:480px;width:15px;height:15px;border:1px solid #000;background:#d4d4d4"></div>
<div style="left:187px;top:480px;width:15px;height:15px;border:1px solid #000;background:#d4d4d4"></div>
<div style="left:203px;top:480px;width:15px;height:15px;border:1px solid #000;background:#d4d4d4"></div>
<div style="left:219px;top:480px;width:15px;height:15px;border:1px solid #000;background:#d4d4d4"></div>
<div style="left:235px;top:480px;width:15px;height:15px;border:1px solid #000;background:#d4d4d4"></div>
<div style="left:255px;top:480px;width:15px;height:15px;border:1px solid #000;background:#d4d4d4"></div>
<div style="left:271px;top:480px;width:15px;height:15px;border:1px solid #000;background:#d4d4d4"></div>
<div style="left:287px;top:480px;width:15px;height:15px;border:1px solid #000;background:#d4d4d4"></div>
<div style="left:303px;top:480px;width:15px;height:15px;border:1px solid #000;background:#d4d4d4"></div>
<div style="left:323px;top:480px;width:15px;height:15px;border:1px solid #000;background:#d4d4d4"></div>
<div style="left:339px;top:480px;width:15px;height:15px;border:1px solid #000;background:#d4d4d4"></div>
<div style="left:355px;top:480px;width:15px;height:15px;border:1px solid #000;background:#d4d4d4"></div>
<div style="left:371px;top:480px;width:15px;height:15px;border:1px solid #000;background:#d4d4d4"></div>
<div style="left:391px;top:480px;width:15px;height:15px;border:1px solid #000;background:#d4d4d4"></div>
<div style="left:407px;top:480px;width:15px;height:15px;border:1px solid #000;background:#d4d4d4"></div>
<div style="left:423px;top:480px;width:15px;height:15px;border:1px solid #000;background:#d4d4d4"></div>
<div style="left:439px;top:480px;width:15px;height:15px;border:1px solid #000;background:#d4d4d4"></div>
<div style="left:459px;top:480px;width:15px;height:15px;border:1px solid #000;background:#d4d4d4"></div>
<div style="left:475px;top:480px;width:15px;height:15px;border:1px solid #000;background:#d4d4d4"></div>
<div style="left:491px;top:480px;width:15px;height:15px;border:1px solid #000;background:#d4d4d4"></div>
<div style="left:507px;top:480px;width:15px;height:15px;border:1px solid #000;background:#d4d4d4"></div>
<div style="left:527px;top:480px;width:15px;height:15px;border:1px solid #000;background:#d4d4d4"></div>
<div style="left:543px;top:480px;width:15px;height:15px;border:1px solid #000;background:#d4d4d4"></div>
<div style="left:559px;top:480px;width:15px;height:15px;border:1px solid #000;background:#d4d4d4"></div>
<div style="left:575px;top:480px;width:15px;height:15px;border:1px solid #000;background:#d4d4d4"></div>
<div style="left:595px;top:480px;width:15px;height:15px;border:1px solid #000;background:#d4d4d4"></div>
<div style="left:611px;top:480px;width:15px;height:15px;border:1px solid #000;background:#d4d4d4"></div>
<div style="left:627px;top:480px;width:15px;height:15px;border:1px solid #000;background:#d4d4d4"></div>
<div style="left:643px;top:480px;width:15px;height:15px;border:1px solid #000;background:#d4d4d4"></div>
<div style="left:39px;top:503px;width:650px;height:45px;background:#000000"></div>
<div style="left:40px;top:504px;width:648px;height:43px;background:#808080"></div>
<div class="mr" style="left:46px;top:510px;color:#ffffff;font-size:12px;letter-spacing:0.8px;-webkit-text-stroke:0.25px #fff">LC-3</div>
<div style="left:43px;top:524px;width:40px;height:17px;background:#a0cff8"></div>
<div class="mr" style="left:46px;top:526px;font-weight:bold;font-size:12px;letter-spacing:0.8px">FCoE</div>
<div class="t" style="left:108px;top:510px;color:#fff;font-size:11px;letter-spacing:1.2px;-webkit-text-stroke:0.3px #fff">0</div>
<div class="t" style="left:108px;top:528px;color:#fff;font-size:11px;letter-spacing:1.2px;-webkit-text-stroke:0.3px #fff">1</div>
<div class="t" style="left:663px;top:510px;color:#fff;font-size:11px;letter-spacing:1.2px;-webkit-text-stroke:0.3px #fff">62</div>
<div class="t" style="left:663px;top:528px;color:#fff;font-size:11px;letter-spacing:1.2px;-webkit-text-stroke:0.3px #fff">63</div>
<div style="left:119px;top:509px;width:15px;height:15px;border:1px solid #000;background:#d4d4d4"></div>
<div style="left:135px;top:509px;width:15px;height:15px;border:1px solid #000;background:#d4d4d4"></div>
<div style="left:151px;top:509px;width:15px;height:15px;border:1px solid #000;background:#d4d4d4"></div>
<div style="left:167px;top:509px;width:15px;height:15px;border:1px solid #000;background:#d4d4d4"></div>
<div style="left:187px;top:509px;width:15px;height:15px;border:1px solid #000;background:#d4d4d4"></div>
<div style="left:203px;top:509px;width:15px;height:15px;border:1px solid #000;background:#d4d4d4"></div>
<div style="left:219px;top:509px;width:15px;height:15px;border:1px solid #000;background:#d4d4d4"></div>
<div style="left:235px;top:509px;width:15px;height:15px;border:1px solid #000;background:#d4d4d4"></div>
<div style="left:255px;top:509px;width:15px;height:15px;border:1px solid #000;background:#d4d4d4"></div>
<div style="left:271px;top:509px;width:15px;height:15px;border:1px solid #000;background:#d4d4d4"></div>
<div style="left:287px;top:509px;width:15px;height:15px;border:1px solid #000;background:#d4d4d4"></div>
<div style="left:303px;top:509px;width:15px;height:15px;border:1px solid #000;background:#d4d4d4"></div>
<div style="left:323px;top:509px;width:15px;height:15px;border:1px solid #000;background:#d4d4d4"></div>
<div style="left:339px;top:509px;width:15px;height:15px;border:1px solid #000;background:#d4d4d4"></div>
<div style="left:355px;top:509px;width:15px;height:15px;border:1px solid #000;background:#d4d4d4"></div>
<div style="left:371px;top:509px;width:15px;height:15px;border:1px solid #000;background:#d4d4d4"></div>
<div style="left:391px;top:509px;width:15px;height:15px;border:1px solid #000;background:#d4d4d4"></div>
<div style="left:407px;top:509px;width:15px;height:15px;border:1px solid #000;background:#d4d4d4"></div>
<div style="left:423px;top:509px;width:15px;height:15px;border:1px solid #000;background:#d4d4d4"></div>
<div style="left:439px;top:509px;width:15px;height:15px;border:1px solid #000;background:#d4d4d4"></div>
<div style="left:459px;top:509px;width:15px;height:15px;border:1px solid #000;background:#d4d4d4"></div>
<div style="left:475px;top:509px;width:15px;height:15px;border:1px solid #000;background:#d4d4d4"></div>
<div style="left:491px;top:509px;width:15px;height:15px;border:1px solid #000;background:#d4d4d4"></div>
<div style="left:507px;top:509px;width:15px;height:15px;border:1px solid #000;background:#d4d4d4"></div>
<div style="left:527px;top:509px;width:15px;height:15px;border:1px solid #000;background:#d4d4d4"></div>
<div style="left:543px;top:509px;width:15px;height:15px;border:1px solid #000;background:#d4d4d4"></div>
<div style="left:559px;top:509px;width:15px;height:15px;border:1px solid #000;background:#d4d4d4"></div>
<div style="left:575px;top:509px;width:15px;height:15px;border:1px solid #000;background:#d4d4d4"></div>
<div style="left:595px;top:509px;width:15px;height:15px;border:1px solid #000;background:#d4d4d4"></div>
<div style="left:611px;top:509px;width:15px;height:15px;border:1px solid #000;background:#d4d4d4"></div>
<div style="left:627px;top:509px;width:15px;height:15px;border:1px solid #000;background:#d4d4d4"></div>
<div style="left:643px;top:509px;width:15px;height:15px;border:1px solid #000;background:#d4d4d4"></div>
<div style="left:119px;top:527px;width:15px;height:15px;border:1px solid #000;background:#d4d4d4"></div>
<div style="left:135px;top:527px;width:15px;height:15px;border:1px solid #000;background:#d4d4d4"></div>
<div style="left:151px;top:527px;width:15px;height:15px;border:1px solid #000;background:#d4d4d4"></div>
<div style="left:167px;top:527px;width:15px;height:15px;border:1px solid #000;background:#d4d4d4"></div>
<div style="left:187px;top:527px;width:15px;height:15px;border:1px solid #000;background:#d4d4d4"></div>
<div style="left:203px;top:527px;width:15px;height:15px;border:1px solid #000;background:#d4d4d4"></div>
<div style="left:219px;top:527px;width:15px;height:15px;border:1px solid #000;background:#d4d4d4"></div>
<div style="left:235px;top:527px;width:15px;height:15px;border:1px solid #000;background:#d4d4d4"></div>
<div style="left:255px;top:527px;width:15px;height:15px;border:1px solid #000;background:#d4d4d4"></div>
<div style="left:271px;top:527px;width:15px;height:15px;border:1px solid #000;background:#d4d4d4"></div>
<div style="left:287px;top:527px;width:15px;height:15px;border:1px solid #000;background:#d4d4d4"></div>
<div style="left:303px;top:527px;width:15px;height:15px;border:1px solid #000;background:#d4d4d4"></div>
<div style="left:323px;top:527px;width:15px;height:15px;border:1px solid #000;background:#d4d4d4"></div>
<div style="left:339px;top:527px;width:15px;height:15px;border:1px solid #000;background:#d4d4d4"></div>
<div style="left:355px;top:527px;width:15px;height:15px;border:1px solid #000;background:#d4d4d4"></div>
<div style="left:371px;top:527px;width:15px;height:15px;border:1px solid #000;background:#d4d4d4"></div>
<div style="left:391px;top:527px;width:15px;height:15px;border:1px solid #000;background:#d4d4d4"></div>
<div style="left:407px;top:527px;width:15px;height:15px;border:1px solid #000;background:#d4d4d4"></div>
<div style="left:423px;top:527px;width:15px;height:15px;border:1px solid #000;background:#d4d4d4"></div>
<div style="left:439px;top:527px;width:15px;height:15px;border:1px solid #000;background:#d4d4d4"></div>
<div style="left:459px;top:527px;width:15px;height:15px;border:1px solid #000;background:#d4d4d4"></div>
<div style="left:475px;top:527px;width:15px;height:15px;border:1px solid #000;background:#d4d4d4"></div>
<div style="left:491px;top:527px;width:15px;height:15px;border:1px solid #000;background:#d4d4d4"></div>
<div style="left:507px;top:527px;width:15px;height:15px;border:1px solid #000;background:#d4d4d4"></div>
<div style="left:527px;top:527px;width:15px;height:15px;border:1px solid #000;background:#d4d4d4"></div>
<div style="left:543px;top:527px;width:15px;height:15px;border:1px solid #000;background:#d4d4d4"></div>
<div style="left:559px;top:527px;width:15px;height:15px;border:1px solid #000;background:#d4d4d4"></div>
<div style="left:575px;top:527px;width:15px;height:15px;border:1px solid #000;background:#d4d4d4"></div>
<div style="left:595px;top:527px;width:15px;height:15px;border:1px solid #000;background:#d4d4d4"></div>
<div style="left:611px;top:527px;width:15px;height:15px;border:1px solid #000;background:#d4d4d4"></div>
<div style="left:627px;top:527px;width:15px;height:15px;border:1px solid #000;background:#d4d4d4"></div>
<div style="left:643px;top:527px;width:15px;height:15px;border:1px solid #000;background:#d4d4d4"></div>
<div style="left:39px;top:550px;width:650px;height:45px;background:#000000"></div>
<div style="left:40px;top:551px;width:648px;height:43px;background:#808080"></div>
<div class="mr" style="left:46px;top:557px;color:#ffffff;font-size:12px;letter-spacing:0.8px;-webkit-text-stroke:0.25px #fff">LC-4</div>
<div style="left:43px;top:571px;width:40px;height:17px;background:#a0cff8"></div>
<div class="mr" style="left:46px;top:573px;font-weight:bold;font-size:12px;letter-spacing:0.8px">FCoE</div>
<div class="t" style="left:108px;top:557px;color:#fff;font-size:11px;letter-spacing:1.2px;-webkit-text-stroke:0.3px #fff">0</div>
<div class="t" style="left:108px;top:575px;color:#fff;font-size:11px;letter-spacing:1.2px;-webkit-text-stroke:0.3px #fff">1</div>
<div class="t" style="left:663px;top:557px;color:#fff;font-size:11px;letter-spacing:1.2px;-webkit-text-stroke:0.3px #fff">62</div>
<div class="t" style="left:663px;top:575px;color:#fff;font-size:11px;letter-spacing:1.2px;-webkit-text-stroke:0.3px #fff">63</div>
<div style="left:119px;top:556px;width:15px;height:15px;border:1px solid #000;background:#d4d4d4"></div>
<div style="left:135px;top:556px;width:15px;height:15px;border:1px solid #000;background:#d4d4d4"></div>
<div style="left:151px;top:556px;width:15px;height:15px;border:1px solid #000;background:#d4d4d4"></div>
<div style="left:167px;top:556px;width:15px;height:15px;border:1px solid #000;background:#d4d4d4"></div>
<div style="left:187px;top:556px;width:15px;height:15px;border:1px solid #000;background:#d4d4d4"></div>
<div style="left:203px;top:556px;width:15px;height:15px;border:1px solid #000;background:#d4d4d4"></div>
<div style="left:219px;top:556px;width:15px;height:15px;border:1px solid #000;background:#d4d4d4"></div>
<div style="left:235px;top:556px;width:15px;height:15px;border:1px solid #000;background:#d4d4d4"></div>
<div style="left:255px;top:556px;width:15px;height:15px;border:1px solid #000;background:#d4d4d4"></div>
<div style="left:271px;top:556px;width:15px;height:15px;border:1px solid #000;background:#d4d4d4"></div>
<div style="left:287px;top:556px;width:15px;height:15px;border:1px solid #000;background:#d4d4d4"></div>
<div style="left:303px;top:556px;width:15px;height:15px;border:1px solid #000;background:#d4d4d4"></div>
<div style="left:323px;top:556px;width:15px;height:15px;border:1px solid #000;background:#d4d4d4"></div>
<div style="left:339px;top:556px;width:15px;height:15px;border:1px solid #000;background:#d4d4d4"></div>
<div style="left:355px;top:556px;width:15px;height:15px;border:1px solid #000;background:#d4d4d4"></div>
<div style="left:371px;top:556px;width:15px;height:15px;border:1px solid #000;background:#d4d4d4"></div>
<div style="left:391px;top:556px;width:15px;height:15px;border:1px solid #000;background:#d4d4d4"></div>
<div style="left:407px;top:556px;width:15px;height:15px;border:1px solid #000;background:#d4d4d4"></div>
<div style="left:423px;top:556px;width:15px;height:15px;border:1px solid #000;background:#d4d4d4"></div>
<div style="left:439px;top:556px;width:15px;height:15px;border:1px solid #000;background:#d4d4d4"></div>
<div style="left:459px;top:556px;width:15px;height:15px;border:1px solid #000;background:#d4d4d4"></div>
<div style="left:475px;top:556px;width:15px;height:15px;border:1px solid #000;background:#d4d4d4"></div>
<div style="left:491px;top:556px;width:15px;height:15px;border:1px solid #000;background:#d4d4d4"></div>
<div style="left:507px;top:556px;width:15px;height:15px;border:1px solid #000;background:#d4d4d4"></div>
<div style="left:527px;top:556px;width:15px;height:15px;border:1px solid #000;background:#d4d4d4"></div>
<div style="left:543px;top:556px;width:15px;height:15px;border:1px solid #000;background:#d4d4d4"></div>
<div style="left:559px;top:556px;width:15px;height:15px;border:1px solid #000;background:#d4d4d4"></div>
<div style="left:575px;top:556px;width:15px;height:15px;border:1px solid #000;background:#d4d4d4"></div>
<div style="left:595px;top:556px;width:15px;height:15px;border:1px solid #000;background:#d4d4d4"></div>
<div style="left:611px;top:556px;width:15px;height:15px;border:1px solid #000;background:#d4d4d4"></div>
<div style="left:627px;top:556px;width:15px;height:15px;border:1px solid #000;background:#d4d4d4"></div>
<div style="left:643px;top:556px;width:15px;height:15px;border:1px solid #000;background:#d4d4d4"></div>
<div style="left:119px;top:574px;width:15px;height:15px;border:1px solid #000;background:#d4d4d4"></div>
<div style="left:135px;top:574px;width:15px;height:15px;border:1px solid #000;background:#d4d4d4"></div>
<div style="left:151px;top:574px;width:15px;height:15px;border:1px solid #000;background:#d4d4d4"></div>
<div style="left:167px;top:574px;width:15px;height:15px;border:1px solid #000;background:#d4d4d4"></div>
<div style="left:187px;top:574px;width:15px;height:15px;border:1px solid #000;background:#d4d4d4"></div>
<div style="left:203px;top:574px;width:15px;height:15px;border:1px solid #000;background:#d4d4d4"></div>
<div style="left:219px;top:574px;width:15px;height:15px;border:1px solid #000;background:#d4d4d4"></div>
<div style="left:235px;top:574px;width:15px;height:15px;border:1px solid #000;background:#d4d4d4"></div>
<div style="left:255px;top:574px;width:15px;height:15px;border:1px solid #000;background:#d4d4d4"></div>
<div style="left:271px;top:574px;width:15px;height:15px;border:1px solid #000;background:#d4d4d4"></div>
<div style="left:287px;top:574px;width:15px;height:15px;border:1px solid #000;background:#d4d4d4"></div>
<div style="left:303px;top:574px;width:15px;height:15px;border:1px solid #000;background:#d4d4d4"></div>
<div style="left:323px;top:574px;width:15px;height:15px;border:1px solid #000;background:#d4d4d4"></div>
<div style="left:339px;top:574px;width:15px;height:15px;border:1px solid #000;background:#d4d4d4"></div>
<div style="left:355px;top:574px;width:15px;height:15px;border:1px solid #000;background:#d4d4d4"></div>
<div style="left:371px;top:574px;width:15px;height:15px;border:1px solid #000;background:#d4d4d4"></div>
<div style="left:391px;top:574px;width:15px;height:15px;border:1px solid #000;background:#d4d4d4"></div>
<div style="left:407px;top:574px;width:15px;height:15px;border:1px solid #000;background:#d4d4d4"></div>
<div style="left:423px;top:574px;width:15px;height:15px;border:1px solid #000;background:#d4d4d4"></div>
<div style="left:439px;top:574px;width:15px;height:15px;border:1px solid #000;background:#d4d4d4"></div>
<div style="left:459px;top:574px;width:15px;height:15px;border:1px solid #000;background:#d4d4d4"></div>
<div style="left:475px;top:574px;width:15px;height:15px;border:1px solid #000;background:#d4d4d4"></div>
<div style="left:491px;top:574px;width:15px;height:15px;border:1px solid #000;background:#d4d4d4"></div>
<div style="left:507px;top:574px;width:15px;height:15px;border:1px solid #000;background:#d4d4d4"></div>
<div style="left:527px;top:574px;width:15px;height:15px;border:1px solid #000;background:#d4d4d4"></div>
<div style="left:543px;top:574px;width:15px;height:15px;border:1px solid #000;background:#d4d4d4"></div>
<div style="left:559px;top:574px;width:15px;height:15px;border:1px solid #000;background:#d4d4d4"></div>
<div style="left:575px;top:574px;width:15px;height:15px;border:1px solid #000;background:#d4d4d4"></div>
<div style="left:595px;top:574px;width:15px;height:15px;border:1px solid #000;background:#d4d4d4"></div>
<div style="left:611px;top:574px;width:15px;height:15px;border:1px solid #000;background:#d4d4d4"></div>
<div style="left:627px;top:574px;width:15px;height:15px;border:1px solid #000;background:#d4d4d4"></div>
<div style="left:643px;top:574px;width:15px;height:15px;border:1px solid #000;background:#d4d4d4"></div>
<div style="left:39px;top:597px;width:650px;height:45px;background:#000000"></div>
<div style="left:40px;top:598px;width:648px;height:43px;background:#808080"></div>
<div class="mr" style="left:46px;top:604px;color:#ffffff;font-size:12px;letter-spacing:0.8px;-webkit-text-stroke:0.25px #fff">LC-5</div>
<div style="left:43px;top:618px;width:23px;height:16px;background:#ffff00"></div>
<div class="mr" style="left:46px;top:620px;font-weight:bold;font-size:12px;letter-spacing:0.8px">FC</div>
<div class="t" style="left:108px;top:604px;color:#fff;font-size:11px;letter-spacing:1.2px;-webkit-text-stroke:0.3px #fff">0</div>
<div class="t" style="left:108px;top:622px;color:#fff;font-size:11px;letter-spacing:1.2px;-webkit-text-stroke:0.3px #fff">1</div>
<div class="t" style="left:663px;top:604px;color:#fff;font-size:11px;letter-spacing:1.2px;-webkit-text-stroke:0.3px #fff">62</div>
<div class="t" style="left:663px;top:622px;color:#fff;font-size:11px;letter-spacing:1.2px;-webkit-text-stroke:0.3px #fff">63</div>
<div style="left:119px;top:603px;width:15px;height:15px;border:1px solid #000;background:#d4d4d4"></div>
<div style="left:135px;top:603px;width:15px;height:15px;border:1px solid #000;background:#d4d4d4"></div>
<div style="left:151px;top:603px;width:15px;height:15px;border:1px solid #000;background:#d4d4d4"></div>
<div style="left:167px;top:603px;width:15px;height:15px;border:1px solid #000;background:#d4d4d4"></div>
<div style="left:187px;top:603px;width:15px;height:15px;border:1px solid #000;background:#d4d4d4"></div>
<div style="left:203px;top:603px;width:15px;height:15px;border:1px solid #000;background:#d4d4d4"></div>
<div style="left:219px;top:603px;width:15px;height:15px;border:1px solid #000;background:#d4d4d4"></div>
<div style="left:235px;top:603px;width:15px;height:15px;border:1px solid #000;background:#d4d4d4"></div>
<div style="left:255px;top:603px;width:15px;height:15px;border:1px solid #000;background:#d4d4d4"></div>
<div style="left:271px;top:603px;width:15px;height:15px;border:1px solid #000;background:#d4d4d4"></div>
<div style="left:287px;top:603px;width:15px;height:15px;border:1px solid #000;background:#d4d4d4"></div>
<div style="left:303px;top:603px;width:15px;height:15px;border:1px solid #000;background:#d4d4d4"></div>
<div style="left:323px;top:603px;width:15px;height:15px;border:1px solid #000;background:#d4d4d4"></div>
<div style="left:339px;top:603px;width:15px;height:15px;border:1px solid #000;background:#d4d4d4"></div>
<div style="left:355px;top:603px;width:15px;height:15px;border:1px solid #000;background:#d4d4d4"></div>
<div style="left:371px;top:603px;width:15px;height:15px;border:1px solid #000;background:#d4d4d4"></div>
<div style="left:391px;top:603px;width:15px;height:15px;border:1px solid #000;background:#d4d4d4"></div>
<div style="left:407px;top:603px;width:15px;height:15px;border:1px solid #000;background:#d4d4d4"></div>
<div style="left:423px;top:603px;width:15px;height:15px;border:1px solid #000;background:#d4d4d4"></div>
<div style="left:439px;top:603px;width:15px;height:15px;border:1px solid #000;background:#d4d4d4"></div>
<div style="left:459px;top:603px;width:15px;height:15px;border:1px solid #000;background:#d4d4d4"></div>
<div style="left:475px;top:603px;width:15px;height:15px;border:1px solid #000;background:#d4d4d4"></div>
<div style="left:491px;top:603px;width:15px;height:15px;border:1px solid #000;background:#d4d4d4"></div>
<div style="left:507px;top:603px;width:15px;height:15px;border:1px solid #000;background:#d4d4d4"></div>
<div style="left:527px;top:603px;width:15px;height:15px;border:1px solid #000;background:#d4d4d4"></div>
<div style="left:543px;top:603px;width:15px;height:15px;border:1px solid #000;background:#d4d4d4"></div>
<div style="left:559px;top:603px;width:15px;height:15px;border:1px solid #000;background:#d4d4d4"></div>
<div style="left:575px;top:603px;width:15px;height:15px;border:1px solid #000;background:#d4d4d4"></div>
<div style="left:595px;top:603px;width:15px;height:15px;border:1px solid #000;background:#d4d4d4"></div>
<div style="left:611px;top:603px;width:15px;height:15px;border:1px solid #000;background:#d4d4d4"></div>
<div style="left:627px;top:603px;width:15px;height:15px;border:1px solid #000;background:#d4d4d4"></div>
<div style="left:643px;top:603px;width:15px;height:15px;border:1px solid #000;background:#d4d4d4"></div>
<div style="left:119px;top:621px;width:15px;height:15px;border:1px solid #000;background:#d4d4d4"></div>
<div style="left:135px;top:621px;width:15px;height:15px;border:1px solid #000;background:#d4d4d4"></div>
<div style="left:151px;top:621px;width:15px;height:15px;border:1px solid #000;background:#d4d4d4"></div>
<div style="left:167px;top:621px;width:15px;height:15px;border:1px solid #000;background:#d4d4d4"></div>
<div style="left:187px;top:621px;width:15px;height:15px;border:1px solid #000;background:#d4d4d4"></div>
<div style="left:203px;top:621px;width:15px;height:15px;border:1px solid #000;background:#d4d4d4"></div>
<div style="left:219px;top:621px;width:15px;height:15px;border:1px solid #000;background:#d4d4d4"></div>
<div style="left:235px;top:621px;width:15px;height:15px;border:1px solid #000;background:#d4d4d4"></div>
<div style="left:255px;top:621px;width:15px;height:15px;border:1px solid #000;background:#d4d4d4"></div>
<div style="left:271px;top:621px;width:15px;height:15px;border:1px solid #000;background:#d4d4d4"></div>
<div style="left:287px;top:621px;width:15px;height:15px;border:1px solid #000;background:#d4d4d4"></div>
<div style="left:303px;top:621px;width:15px;height:15px;border:1px solid #000;background:#d4d4d4"></div>
<div style="left:323px;top:621px;width:15px;height:15px;border:1px solid #000;background:#d4d4d4"></div>
<div style="left:339px;top:621px;width:15px;height:15px;border:1px solid #000;background:#d4d4d4"></div>
<div style="left:355px;top:621px;width:15px;height:15px;border:1px solid #000;background:#d4d4d4"></div>
<div style="left:371px;top:621px;width:15px;height:15px;border:1px solid #000;background:#d4d4d4"></div>
<div style="left:391px;top:621px;width:15px;height:15px;border:1px solid #000;background:#d4d4d4"></div>
<div style="left:407px;top:621px;width:15px;height:15px;border:1px solid #000;background:#d4d4d4"></div>
<div style="left:423px;top:621px;width:15px;height:15px;border:1px solid #000;background:#d4d4d4"></div>
<div style="left:439px;top:621px;width:15px;height:15px;border:1px solid #000;background:#d4d4d4"></div>
<div style="left:459px;top:621px;width:15px;height:15px;border:1px solid #000;background:#d4d4d4"></div>
<div style="left:475px;top:621px;width:15px;height:15px;border:1px solid #000;background:#d4d4d4"></div>
<div style="left:491px;top:621px;width:15px;height:15px;border:1px solid #000;background:#d4d4d4"></div>
<div style="left:507px;top:621px;width:15px;height:15px;border:1px solid #000;background:#d4d4d4"></div>
<div style="left:527px;top:621px;width:15px;height:15px;border:1px solid #000;background:#d4d4d4"></div>
<div style="left:543px;top:621px;width:15px;height:15px;border:1px solid #000;background:#d4d4d4"></div>
<div style="left:559px;top:621px;width:15px;height:15px;border:1px solid #000;background:#d4d4d4"></div>
<div style="left:575px;top:621px;width:15px;height:15px;border:1px solid #000;background:#d4d4d4"></div>
<div style="left:595px;top:621px;width:15px;height:15px;border:1px solid #000;background:#d4d4d4"></div>
<div style="left:611px;top:621px;width:15px;height:15px;border:1px solid #000;background:#d4d4d4"></div>
<div style="left:627px;top:621px;width:15px;height:15px;border:1px solid #000;background:#d4d4d4"></div>
<div style="left:643px;top:621px;width:15px;height:15px;border:1px solid #000;background:#d4d4d4"></div>
<div style="left:39px;top:644px;width:650px;height:45px;background:#000000"></div>
<div style="left:40px;top:645px;width:648px;height:43px;background:#808080"></div>
<div class="mr" style="left:46px;top:651px;color:#ffffff;font-size:12px;letter-spacing:0.8px;-webkit-text-stroke:0.25px #fff">LC-6</div>
<div style="left:43px;top:665px;width:23px;height:16px;background:#ffff00"></div>
<div class="mr" style="left:46px;top:667px;font-weight:bold;font-size:12px;letter-spacing:0.8px">FC</div>
<div class="t" style="left:108px;top:651px;color:#fff;font-size:11px;letter-spacing:1.2px;-webkit-text-stroke:0.3px #fff">0</div>
<div class="t" style="left:108px;top:669px;color:#fff;font-size:11px;letter-spacing:1.2px;-webkit-text-stroke:0.3px #fff">1</div>
<div class="t" style="left:663px;top:651px;color:#fff;font-size:11px;letter-spacing:1.2px;-webkit-text-stroke:0.3px #fff">62</div>
<div class="t" style="left:663px;top:669px;color:#fff;font-size:11px;letter-spacing:1.2px;-webkit-text-stroke:0.3px #fff">63</div>
<div style="left:119px;top:650px;width:15px;height:15px;border:1px solid #000;background:#d4d4d4"></div>
<div style="left:135px;top:650px;width:15px;height:15px;border:1px solid #000;background:#d4d4d4"></div>
<div style="left:151px;top:650px;width:15px;height:15px;border:1px solid #000;background:#d4d4d4"></div>
<div style="left:167px;top:650px;width:15px;height:15px;border:1px solid #000;background:#d4d4d4"></div>
<div style="left:187px;top:650px;width:15px;height:15px;border:1px solid #000;background:#d4d4d4"></div>
<div style="left:203px;top:650px;width:15px;height:15px;border:1px solid #000;background:#d4d4d4"></div>
<div style="left:219px;top:650px;width:15px;height:15px;border:1px solid #000;background:#d4d4d4"></div>
<div style="left:235px;top:650px;width:15px;height:15px;border:1px solid #000;background:#d4d4d4"></div>
<div style="left:255px;top:650px;width:15px;height:15px;border:1px solid #000;background:#d4d4d4"></div>
<div style="left:271px;top:650px;width:15px;height:15px;border:1px solid #000;background:#d4d4d4"></div>
<div style="left:287px;top:650px;width:15px;height:15px;border:1px solid #000;background:#d4d4d4"></div>
<div style="left:303px;top:650px;width:15px;height:15px;border:1px solid #000;background:#d4d4d4"></div>
<div style="left:323px;top:650px;width:15px;height:15px;border:1px solid #000;background:#d4d4d4"></div>
<div style="left:339px;top:650px;width:15px;height:15px;border:1px solid #000;background:#d4d4d4"></div>
<div style="left:355px;top:650px;width:15px;height:15px;border:1px solid #000;background:#d4d4d4"></div>
<div style="left:371px;top:650px;width:15px;height:15px;border:1px solid #000;background:#d4d4d4"></div>
<div style="left:391px;top:650px;width:15px;height:15px;border:1px solid #000;background:#d4d4d4"></div>
<div style="left:407px;top:650px;width:15px;height:15px;border:1px solid #000;background:#d4d4d4"></div>
<div style="left:423px;top:650px;width:15px;height:15px;border:1px solid #000;background:#d4d4d4"></div>
<div style="left:439px;top:650px;width:15px;height:15px;border:1px solid #000;background:#d4d4d4"></div>
<div style="left:459px;top:650px;width:15px;height:15px;border:1px solid #000;background:#d4d4d4"></div>
<div style="left:475px;top:650px;width:15px;height:15px;border:1px solid #000;background:#d4d4d4"></div>
<div style="left:491px;top:650px;width:15px;height:15px;border:1px solid #000;background:#d4d4d4"></div>
<div style="left:507px;top:650px;width:15px;height:15px;border:1px solid #000;background:#d4d4d4"></div>
<div style="left:527px;top:650px;width:15px;height:15px;border:1px solid #000;background:#d4d4d4"></div>
<div style="left:543px;top:650px;width:15px;height:15px;border:1px solid #000;background:#d4d4d4"></div>
<div style="left:559px;top:650px;width:15px;height:15px;border:1px solid #000;background:#d4d4d4"></div>
<div style="left:575px;top:650px;width:15px;height:15px;border:1px solid #000;background:#d4d4d4"></div>
<div style="left:595px;top:650px;width:15px;height:15px;border:1px solid #000;background:#d4d4d4"></div>
<div style="left:611px;top:650px;width:15px;height:15px;border:1px solid #000;background:#d4d4d4"></div>
<div style="left:627px;top:650px;width:15px;height:15px;border:1px solid #000;background:#d4d4d4"></div>
<div style="left:643px;top:650px;width:15px;height:15px;border:1px solid #000;background:#d4d4d4"></div>
<div style="left:119px;top:668px;width:15px;height:15px;border:1px solid #000;background:#d4d4d4"></div>
<div style="left:135px;top:668px;width:15px;height:15px;border:1px solid #000;background:#d4d4d4"></div>
<div style="left:151px;top:668px;width:15px;height:15px;border:1px solid #000;background:#d4d4d4"></div>
<div style="left:167px;top:668px;width:15px;height:15px;border:1px solid #000;background:#d4d4d4"></div>
<div style="left:187px;top:668px;width:15px;height:15px;border:1px solid #000;background:#d4d4d4"></div>
<div style="left:203px;top:668px;width:15px;height:15px;border:1px solid #000;background:#d4d4d4"></div>
<div style="left:219px;top:668px;width:15px;height:15px;border:1px solid #000;background:#d4d4d4"></div>
<div style="left:235px;top:668px;width:15px;height:15px;border:1px solid #000;background:#d4d4d4"></div>
<div style="left:255px;top:668px;width:15px;height:15px;border:1px solid #000;background:#d4d4d4"></div>
<div style="left:271px;top:668px;width:15px;height:15px;border:1px solid #000;background:#d4d4d4"></div>
<div style="left:287px;top:668px;width:15px;height:15px;border:1px solid #000;background:#d4d4d4"></div>
<div style="left:303px;top:668px;width:15px;height:15px;border:1px solid #000;background:#d4d4d4"></div>
<div style="left:323px;top:668px;width:15px;height:15px;border:1px solid #000;background:#d4d4d4"></div>
<div style="left:339px;top:668px;width:15px;height:15px;border:1px solid #000;background:#d4d4d4"></div>
<div style="left:355px;top:668px;width:15px;height:15px;border:1px solid #000;background:#d4d4d4"></div>
<div style="left:371px;top:668px;width:15px;height:15px;border:1px solid #000;background:#d4d4d4"></div>
<div style="left:391px;top:668px;width:15px;height:15px;border:1px solid #000;background:#d4d4d4"></div>
<div style="left:407px;top:668px;width:15px;height:15px;border:1px solid #000;background:#d4d4d4"></div>
<div style="left:423px;top:668px;width:15px;height:15px;border:1px solid #000;background:#d4d4d4"></div>
<div style="left:439px;top:668px;width:15px;height:15px;border:1px solid #000;background:#d4d4d4"></div>
<div style="left:459px;top:668px;width:15px;height:15px;border:1px solid #000;background:#d4d4d4"></div>
<div style="left:475px;top:668px;width:15px;height:15px;border:1px solid #000;background:#d4d4d4"></div>
<div style="left:491px;top:668px;width:15px;height:15px;border:1px solid #000;background:#d4d4d4"></div>
<div style="left:507px;top:668px;width:15px;height:15px;border:1px solid #000;background:#d4d4d4"></div>
<div style="left:527px;top:668px;width:15px;height:15px;border:1px solid #000;background:#d4d4d4"></div>
<div style="left:543px;top:668px;width:15px;height:15px;border:1px solid #000;background:#d4d4d4"></div>
<div style="left:559px;top:668px;width:15px;height:15px;border:1px solid #000;background:#d4d4d4"></div>
<div style="left:575px;top:668px;width:15px;height:15px;border:1px solid #000;background:#d4d4d4"></div>
<div style="left:595px;top:668px;width:15px;height:15px;border:1px solid #000;background:#d4d4d4"></div>
<div style="left:611px;top:668px;width:15px;height:15px;border:1px solid #000;background:#d4d4d4"></div>
<div style="left:627px;top:668px;width:15px;height:15px;border:1px solid #000;background:#d4d4d4"></div>
<div style="left:643px;top:668px;width:15px;height:15px;border:1px solid #000;background:#d4d4d4"></div>
<div style="left:39px;top:691px;width:650px;height:45px;background:#000000"></div>
<div style="left:40px;top:692px;width:648px;height:43px;background:#808080"></div>
<div class="mr" style="left:46px;top:698px;color:#ffffff;font-size:12px;letter-spacing:0.8px;-webkit-text-stroke:0.25px #fff">LC-7</div>
<div style="left:43px;top:712px;width:23px;height:16px;background:#ffff00"></div>
<div class="mr" style="left:46px;top:714px;font-weight:bold;font-size:12px;letter-spacing:0.8px">FC</div>
<div class="t" style="left:108px;top:698px;color:#fff;font-size:11px;letter-spacing:1.2px;-webkit-text-stroke:0.3px #fff">0</div>
<div class="t" style="left:108px;top:716px;color:#fff;font-size:11px;letter-spacing:1.2px;-webkit-text-stroke:0.3px #fff">1</div>
<div class="t" style="left:663px;top:698px;color:#fff;font-size:11px;letter-spacing:1.2px;-webkit-text-stroke:0.3px #fff">62</div>
<div class="t" style="left:663px;top:716px;color:#fff;font-size:11px;letter-spacing:1.2px;-webkit-text-stroke:0.3px #fff">63</div>
<div style="left:119px;top:697px;width:15px;height:15px;border:1px solid #000;background:#d4d4d4"></div>
<div style="left:135px;top:697px;width:15px;height:15px;border:1px solid #000;background:#d4d4d4"></div>
<div style="left:151px;top:697px;width:15px;height:15px;border:1px solid #000;background:#d4d4d4"></div>
<div style="left:167px;top:697px;width:15px;height:15px;border:1px solid #000;background:#d4d4d4"></div>
<div style="left:187px;top:697px;width:15px;height:15px;border:1px solid #000;background:#d4d4d4"></div>
<div style="left:203px;top:697px;width:15px;height:15px;border:1px solid #000;background:#d4d4d4"></div>
<div style="left:219px;top:697px;width:15px;height:15px;border:1px solid #000;background:#d4d4d4"></div>
<div style="left:235px;top:697px;width:15px;height:15px;border:1px solid #000;background:#d4d4d4"></div>
<div style="left:255px;top:697px;width:15px;height:15px;border:1px solid #000;background:#d4d4d4"></div>
<div style="left:271px;top:697px;width:15px;height:15px;border:1px solid #000;background:#d4d4d4"></div>
<div style="left:287px;top:697px;width:15px;height:15px;border:1px solid #000;background:#d4d4d4"></div>
<div style="left:303px;top:697px;width:15px;height:15px;border:1px solid #000;background:#d4d4d4"></div>
<div style="left:323px;top:697px;width:15px;height:15px;border:1px solid #000;background:#d4d4d4"></div>
<div style="left:339px;top:697px;width:15px;height:15px;border:1px solid #000;background:#d4d4d4"></div>
<div style="left:355px;top:697px;width:15px;height:15px;border:1px solid #000;background:#d4d4d4"></div>
<div style="left:371px;top:697px;width:15px;height:15px;border:1px solid #000;background:#d4d4d4"></div>
<div style="left:391px;top:697px;width:15px;height:15px;border:1px solid #000;background:#d4d4d4"></div>
<div style="left:407px;top:697px;width:15px;height:15px;border:1px solid #000;background:#d4d4d4"></div>
<div style="left:423px;top:697px;width:15px;height:15px;border:1px solid #000;background:#d4d4d4"></div>
<div style="left:439px;top:697px;width:15px;height:15px;border:1px solid #000;background:#d4d4d4"></div>
<div style="left:459px;top:697px;width:15px;height:15px;border:1px solid #000;background:#d4d4d4"></div>
<div style="left:475px;top:697px;width:15px;height:15px;border:1px solid #000;background:#d4d4d4"></div>
<div style="left:491px;top:697px;width:15px;height:15px;border:1px solid #000;background:#d4d4d4"></div>
<div style="left:507px;top:697px;width:15px;height:15px;border:1px solid #000;background:#d4d4d4"></div>
<div style="left:527px;top:697px;width:15px;height:15px;border:1px solid #000;background:#d4d4d4"></div>
<div style="left:543px;top:697px;width:15px;height:15px;border:1px solid #000;background:#d4d4d4"></div>
<div style="left:559px;top:697px;width:15px;height:15px;border:1px solid #000;background:#d4d4d4"></div>
<div style="left:575px;top:697px;width:15px;height:15px;border:1px solid #000;background:#d4d4d4"></div>
<div style="left:595px;top:697px;width:15px;height:15px;border:1px solid #000;background:#d4d4d4"></div>
<div style="left:611px;top:697px;width:15px;height:15px;border:1px solid #000;background:#d4d4d4"></div>
<div style="left:627px;top:697px;width:15px;height:15px;border:1px solid #000;background:#d4d4d4"></div>
<div style="left:643px;top:697px;width:15px;height:15px;border:1px solid #000;background:#d4d4d4"></div>
<div style="left:119px;top:715px;width:15px;height:15px;border:1px solid #000;background:#d4d4d4"></div>
<div style="left:135px;top:715px;width:15px;height:15px;border:1px solid #000;background:#d4d4d4"></div>
<div style="left:151px;top:715px;width:15px;height:15px;border:1px solid #000;background:#d4d4d4"></div>
<div style="left:167px;top:715px;width:15px;height:15px;border:1px solid #000;background:#d4d4d4"></div>
<div style="left:187px;top:715px;width:15px;height:15px;border:1px solid #000;background:#d4d4d4"></div>
<div style="left:203px;top:715px;width:15px;height:15px;border:1px solid #000;background:#d4d4d4"></div>
<div style="left:219px;top:715px;width:15px;height:15px;border:1px solid #000;background:#d4d4d4"></div>
<div style="left:235px;top:715px;width:15px;height:15px;border:1px solid #000;background:#d4d4d4"></div>
<div style="left:255px;top:715px;width:15px;height:15px;border:1px solid #000;background:#d4d4d4"></div>
<div style="left:271px;top:715px;width:15px;height:15px;border:1px solid #000;background:#d4d4d4"></div>
<div style="left:287px;top:715px;width:15px;height:15px;border:1px solid #000;background:#d4d4d4"></div>
<div style="left:303px;top:715px;width:15px;height:15px;border:1px solid #000;background:#d4d4d4"></div>
<div style="left:323px;top:715px;width:15px;height:15px;border:1px solid #000;background:#d4d4d4"></div>
<div style="left:339px;top:715px;width:15px;height:15px;border:1px solid #000;background:#d4d4d4"></div>
<div style="left:355px;top:715px;width:15px;height:15px;border:1px solid #000;background:#d4d4d4"></div>
<div style="left:371px;top:715px;width:15px;height:15px;border:1px solid #000;background:#d4d4d4"></div>
<div style="left:391px;top:715px;width:15px;height:15px;border:1px solid #000;background:#d4d4d4"></div>
<div style="left:407px;top:715px;width:15px;height:15px;border:1px solid #000;background:#d4d4d4"></div>
<div style="left:423px;top:715px;width:15px;height:15px;border:1px solid #000;background:#d4d4d4"></div>
<div style="left:439px;top:715px;width:15px;height:15px;border:1px solid #000;background:#d4d4d4"></div>
<div style="left:459px;top:715px;width:15px;height:15px;border:1px solid #000;background:#d4d4d4"></div>
<div style="left:475px;top:715px;width:15px;height:15px;border:1px solid #000;background:#d4d4d4"></div>
<div style="left:491px;top:715px;width:15px;height:15px;border:1px solid #000;background:#d4d4d4"></div>
<div style="left:507px;top:715px;width:15px;height:15px;border:1px solid #000;background:#d4d4d4"></div>
<div style="left:527px;top:715px;width:15px;height:15px;border:1px solid #000;background:#d4d4d4"></div>
<div style="left:543px;top:715px;width:15px;height:15px;border:1px solid #000;background:#d4d4d4"></div>
<div style="left:559px;top:715px;width:15px;height:15px;border:1px solid #000;background:#d4d4d4"></div>
<div style="left:575px;top:715px;width:15px;height:15px;border:1px solid #000;background:#d4d4d4"></div>
<div style="left:595px;top:715px;width:15px;height:15px;border:1px solid #000;background:#d4d4d4"></div>
<div style="left:611px;top:715px;width:15px;height:15px;border:1px solid #000;background:#d4d4d4"></div>
<div style="left:627px;top:715px;width:15px;height:15px;border:1px solid #000;background:#d4d4d4"></div>
<div style="left:643px;top:715px;width:15px;height:15px;border:1px solid #000;background:#d4d4d4"></div>
<div style="left:703px;top:105px;width:9px;height:1px;background:#808080"></div>
<div style="left:704px;top:106px;width:8px;height:1px;background:#ffffff"></div>
<div style="left:778px;top:105px;width:339px;height:1px;background:#808080"></div>
<div style="left:778px;top:106px;width:340px;height:1px;background:#ffffff"></div>
<div style="left:703px;top:105px;width:1px;height:575px;background:#808080"></div>
<div style="left:704px;top:106px;width:1px;height:574px;background:#ffffff"></div>
<div style="left:1116px;top:105px;width:1px;height:575px;background:#808080"></div>
<div style="left:1117px;top:105px;width:1px;height:576px;background:#ffffff"></div>
<div style="left:703px;top:679px;width:414px;height:1px;background:#808080"></div>
<div style="left:703px;top:680px;width:415px;height:1px;background:#ffffff"></div>
<div class="t" style="left:714px;top:100px;">Port Settings</div>
<div style="left:709px;top:118px;width:403px;height:557px;background:#ffffff"></div>
<div style="left:709px;top:118px;width:403px;height:1px;background:#808080"></div>
<div style="left:709px;top:118px;width:1px;height:557px;background:#808080"></div>
<div style="left:709px;top:674px;width:403px;height:1px;background:#ffffff"></div>
<div style="left:1111px;top:118px;width:1px;height:557px;background:#ffffff"></div>
<div style="left:710px;top:119px;width:401px;height:1px;background:#404040"></div>
<div style="left:710px;top:119px;width:1px;height:555px;background:#404040"></div>
<div style="left:710px;top:673px;width:401px;height:1px;background:#d4d0c8"></div>
<div style="left:1110px;top:119px;width:1px;height:555px;background:#d4d0c8"></div>
<div style="left:723px;top:128px;width:1px;height:364px;background:repeating-linear-gradient(to bottom,#a0a0a0 0 1px,transparent 1px 2px)"></div>
<div style="left:725px;top:128px;width:8px;height:1px;background:repeating-linear-gradient(to right,#a0a0a0 0 1px,transparent 1px 2px)"></div>
<div class="m" style="left:735px;top:120px;color:#0000ff;">Port Location: switch[1].linecard[0].port[30]</div>
<div style="left:725px;top:144px;width:8px;height:1px;background:repeating-linear-gradient(to right,#a0a0a0 0 1px,transparent 1px 2px)"></div>
<div class="m" style="left:735px;top:136px;">Port Status: Enabled</div>
<div style="left:725px;top:160px;width:8px;height:1px;background:repeating-linear-gradient(to right,#a0a0a0 0 1px,transparent 1px 2px)"></div>
<div class="m" style="left:735px;top:152px;">Port Type: F_Port</div>
<div style="left:725px;top:176px;width:8px;height:1px;background:repeating-linear-gradient(to right,#a0a0a0 0 1px,transparent 1px 2px)"></div>
<div class="m" style="left:735px;top:168px;color:#008000;">Cable Status: Cable Connected with a Host Port</div>
<div style="left:725px;top:192px;width:8px;height:1px;background:repeating-linear-gradient(to right,#a0a0a0 0 1px,transparent 1px 2px)"></div>
<div class="m" style="left:735px;top:184px;">Link Status: Online</div>
<div style="left:725px;top:208px;width:8px;height:1px;background:repeating-linear-gradient(to right,#a0a0a0 0 1px,transparent 1px 2px)"></div>
<div class="m" style="left:735px;top:200px;">Current Link Speed: 10Gbps</div>
<div style="left:725px;top:224px;width:8px;height:1px;background:repeating-linear-gradient(to right,#a0a0a0 0 1px,transparent 1px 2px)"></div>
<div class="m" style="left:735px;top:216px;">Configured Link Speed: Auto Negotiation</div>
<div style="left:725px;top:240px;width:8px;height:1px;background:repeating-linear-gradient(to right,#a0a0a0 0 1px,transparent 1px 2px)"></div>
<div class="m" style="left:735px;top:232px;">Current Topology: Point-to-Point</div>
<div style="left:725px;top:256px;width:8px;height:1px;background:repeating-linear-gradient(to right,#a0a0a0 0 1px,transparent 1px 2px)"></div>
<div class="m" style="left:735px;top:248px;">Configured Topology: Auto</div>
<div style="left:725px;top:272px;width:8px;height:1px;background:repeating-linear-gradient(to right,#a0a0a0 0 1px,transparent 1px 2px)"></div>
<div class="m" style="left:735px;top:264px;">Transceiver Type: 10G SFP+ Fibre</div>
<div style="left:725px;top:288px;width:8px;height:1px;background:repeating-linear-gradient(to right,#a0a0a0 0 1px,transparent 1px 2px)"></div>
<div class="m" style="left:735px;top:280px;">Receiver Buffer Count: 12</div>
<div style="left:725px;top:304px;width:8px;height:1px;background:repeating-linear-gradient(to right,#a0a0a0 0 1px,transparent 1px 2px)"></div>
<div class="m" style="left:735px;top:296px;">Exchange Allocated: 512</div>
<div style="left:725px;top:320px;width:8px;height:1px;background:repeating-linear-gradient(to right,#a0a0a0 0 1px,transparent 1px 2px)"></div>
<div class="m" style="left:735px;top:312px;">Exchange Available: 512</div>
<div style="left:725px;top:336px;width:8px;height:1px;background:repeating-linear-gradient(to right,#a0a0a0 0 1px,transparent 1px 2px)"></div>
<div class="m" style="left:735px;top:328px;">VSAN_ID: 10</div>
<div style="left:725px;top:352px;width:8px;height:1px;background:repeating-linear-gradient(to right,#a0a0a0 0 1px,transparent 1px 2px)"></div>
<div class="m" style="left:735px;top:344px;">VLAN_ID: 2010</div>
<div style="left:725px;top:368px;width:8px;height:1px;background:repeating-linear-gradient(to right,#a0a0a0 0 1px,transparent 1px 2px)"></div>
<div class="m" style="left:735px;top:360px;">Protocol: FCoE</div>
<div style="left:725px;top:384px;width:8px;height:1px;background:repeating-linear-gradient(to right,#a0a0a0 0 1px,transparent 1px 2px)"></div>
<div class="m" style="left:735px;top:376px;">FC Frame Size: 2112</div>
<div style="left:725px;top:400px;width:8px;height:1px;background:repeating-linear-gradient(to right,#a0a0a0 0 1px,transparent 1px 2px)"></div>
<div class="m" style="left:735px;top:392px;">Ethernet MAC MTU: 2500</div>
<div style="left:725px;top:416px;width:8px;height:1px;background:repeating-linear-gradient(to right,#a0a0a0 0 1px,transparent 1px 2px)"></div>
<div class="m" style="left:735px;top:408px;">Fabric Port WWN: 20:82:00:0D:EC:3D:90:64</div>
<div style="left:725px;top:432px;width:8px;height:1px;background:repeating-linear-gradient(to right,#a0a0a0 0 1px,transparent 1px 2px)"></div>
<div class="m" style="left:735px;top:424px;">Fabric Port MAC: 00:0D:EC:3D:90:1F</div>
<div style="left:725px;top:448px;width:8px;height:1px;background:repeating-linear-gradient(to right,#a0a0a0 0 1px,transparent 1px 2px)"></div>
<div class="m" style="left:735px;top:440px;color:#008000;">Local Port Matrix ID: 2078</div>
<div style="left:725px;top:464px;width:8px;height:1px;background:repeating-linear-gradient(to right,#a0a0a0 0 1px,transparent 1px 2px)"></div>
<div class="m" style="left:735px;top:456px;color:#008000;">Adjacent Port Matrix ID: 21</div>
<div style="left:725px;top:480px;width:8px;height:1px;background:repeating-linear-gradient(to right,#a0a0a0 0 1px,transparent 1px 2px)"></div>
<div class="m" style="left:735px;top:472px;color:#008000;">Adjacent Port Location: Client Host [1].[1].[1]</div>
<div style="left:719px;top:492px;width:9px;height:9px;border:1px solid #808080;background:#fff"></div>
<div style="left:721px;top:496px;width:5px;height:1px;background:#000000"></div>
<div style="left:729px;top:496px;width:4px;height:1px;background:repeating-linear-gradient(to right,#a0a0a0 0 1px,transparent 1px 2px)"></div>
<div class="m" style="left:735px;top:488px;">Number of Logged in devices: 2</div>
<div style="left:742px;top:505px;width:1px;height:24px;background:repeating-linear-gradient(to bottom,#a0a0a0 0 1px,transparent 1px 2px)"></div>
<div style="left:744px;top:512px;width:8px;height:1px;background:repeating-linear-gradient(to right,#a0a0a0 0 1px,transparent 1px 2px)"></div>
<div class="m" style="left:755px;top:504px">21:01:00:E0:8B:01:01:03 0E:FC:00:10:00:01 100001</div>
<div style="left:744px;top:528px;width:8px;height:1px;background:repeating-linear-gradient(to right,#a0a0a0 0 1px,transparent 1px 2px)"></div>
<div class="m" style="left:755px;top:520px">21:F1:00:1B:32:01:01:03 0E:FC:00:10:00:04 100004</div>
<div style="left:703px;top:688px;width:223px;height:22px;background:#ffffc0"></div>
<div style="left:703px;top:688px;width:223px;height:1px;background:#808080"></div>
<div style="left:703px;top:688px;width:1px;height:22px;background:#808080"></div>
<div style="left:703px;top:709px;width:223px;height:1px;background:#ffffff"></div>
<div style="left:925px;top:688px;width:1px;height:22px;background:#ffffff"></div>
<div class="m" style="left:716px;top:691px;color:#ff0000">Config SAN Switch Option OFF</div>
<div style="left:932px;top:688px;width:90px;height:22px;background:#ffff00"></div>
<div style="left:932px;top:709px;width:90px;height:1px;background:#000000"></div>
<div style="left:1021px;top:688px;width:1px;height:22px;background:#000000"></div>
<div style="left:932px;top:688px;width:89px;height:1px;background:#ffffa0"></div>
<div style="left:932px;top:688px;width:1px;height:21px;background:#ffffa0"></div>
<div style="left:933px;top:708px;width:88px;height:1px;background:#808000"></div>
<div style="left:1020px;top:689px;width:1px;height:20px;background:#808000"></div>
<div class="t c" style="left:932px;top:692px;width:90px;">Turn ON</div>
<div style="left:1028px;top:687px;width:90px;height:22px;background:#d4d0c8"></div>
<div style="left:1028px;top:708px;width:90px;height:1px;background:#404040"></div>
<div style="left:1117px;top:687px;width:1px;height:22px;background:#404040"></div>
<div style="left:1028px;top:687px;width:89px;height:1px;background:#ffffff"></div>
<div style="left:1028px;top:687px;width:1px;height:21px;background:#ffffff"></div>
<div style="left:1029px;top:707px;width:88px;height:1px;background:#808080"></div>
<div style="left:1116px;top:688px;width:1px;height:20px;background:#808080"></div>
<div class="t c" style="left:1028px;top:692px;width:90px;color:#fff;letter-spacing:-0.9px">Turn OFF</div>
<div class="t c" style="left:1027px;top:691px;width:90px;color:#808080;letter-spacing:-0.9px">Turn OFF</div>
<div style="left:703px;top:715px;width:140px;height:29px;background:#000000"></div>
<div style="left:704px;top:716px;width:138px;height:27px;background:#dcd9d2"></div>
<div style="left:705px;top:717px;width:136px;height:25px;background:#d4d0c8"></div>
<div class="t c" style="left:702px;top:716px;width:140px;height:29px;line-height:29px;color:#8a8a8a">Commit Changes</div>
<div style="left:849px;top:715px;width:130px;height:29px;background:#000000"></div>
<div style="left:850px;top:716px;width:128px;height:27px;background:#dcd9d2"></div>
<div style="left:851px;top:717px;width:126px;height:25px;background:#d4d0c8"></div>
<div class="t c" style="left:848px;top:716px;width:130px;height:29px;line-height:29px;color:#8a8a8a">Cancel Changes</div>
<div style="left:986px;top:723px;width:13px;height:13px;background:#ffffff"></div>
<div style="left:986px;top:723px;width:13px;height:1px;background:#808080"></div>
<div style="left:986px;top:723px;width:1px;height:13px;background:#808080"></div>
<div style="left:986px;top:735px;width:13px;height:1px;background:#ffffff"></div>
<div style="left:998px;top:723px;width:1px;height:13px;background:#ffffff"></div>
<div style="left:987px;top:724px;width:11px;height:1px;background:#404040"></div>
<div style="left:987px;top:724px;width:1px;height:11px;background:#404040"></div>
<div style="left:987px;top:734px;width:11px;height:1px;background:#d4d0c8"></div>
<div style="left:997px;top:724px;width:1px;height:11px;background:#d4d0c8"></div>
<div class="t" style="left:1006px;top:724px;letter-spacing:-0.7px">Force Saving Changes</div>
</body></html>
